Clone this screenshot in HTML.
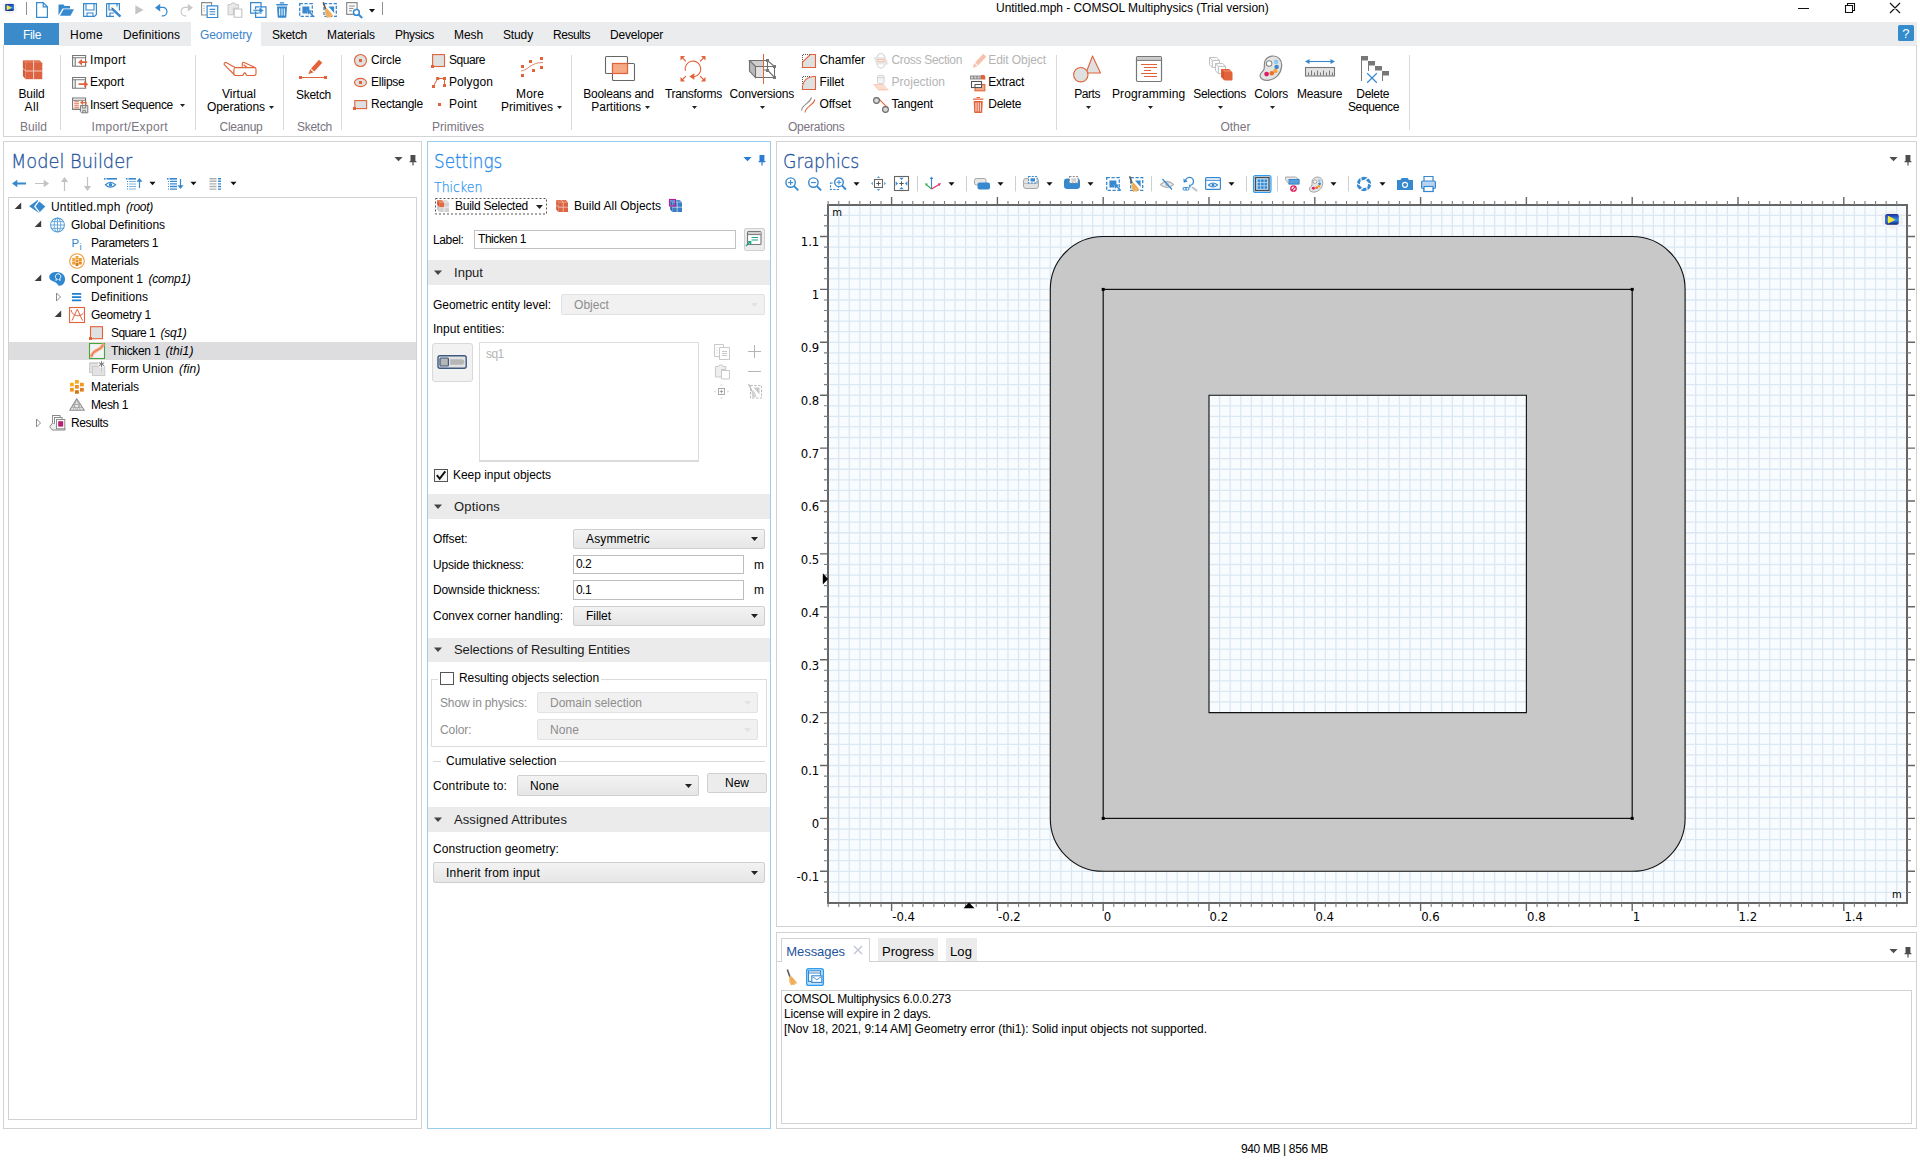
<!DOCTYPE html>
<html><head><meta charset="utf-8"><title>COMSOL Multiphysics</title>
<style>
html,body{margin:0;padding:0;}
body{width:1920px;height:1160px;position:relative;overflow:hidden;background:#fff;font-family:"Liberation Sans",sans-serif;font-size:12px;color:#000;}
.b{position:absolute;box-sizing:border-box;}
.t{position:absolute;white-space:pre;}
svg{overflow:visible;}
</style></head><body>
<span class="t" style="left:996.00px;top:0.00px;font-size:12px;line-height:17px;letter-spacing:-0.038px;">Untitled.mph - COMSOL Multiphysics (Trial version)</span>
<svg class="b" style="left:1795px;top:0px;" width="110" height="16" viewBox="0 0 110 16"><path d="M3 8.5h11 M50.5 5.5h7v7h-7z M52.5 5.5v-2h7v7h-2 M95 3l10 10 M105 3l-10 10" stroke="#111" stroke-width="1.1" fill="none"/></svg>
<svg class="b" style="left:0px;top:0px;" width="1" height="1" viewBox="0 0 1 1"><g transform="translate(5 4) scale(0.66)"><defs><linearGradient id="lgA" x1="0" y1="0" x2="0" y2="1"><stop offset="0" stop-color="#1b2f9a"/><stop offset=".55" stop-color="#2f8fe8"/><stop offset="1" stop-color="#10207a"/></linearGradient><linearGradient id="lgB" x1="0" y1="0" x2="1" y2="0"><stop offset="0" stop-color="#f8ee30"/><stop offset=".6" stop-color="#f0e040"/><stop offset="1" stop-color="#58b8e8"/></linearGradient></defs><path d="M-4.500 .5l12-4.500l9 5l1.500 8.500l-10 6l-10.500-4z" fill="#ededf0" opacity=".85"/><rect x="0" y="0" width="13.600" height="10.600" rx="2.200" fill="url(#lgA)"/><path d="M2.700 1.600l8.200 4l-8.200 3.900z" fill="url(#lgB)"/><rect x="0" y=".6" width="1.800" height="9.400" rx=".9" fill="#3a58c8" opacity=".8"/></g></svg>
<div class="b" style="left:26px;top:2px;width:1px;height:13px;background:#8f8f8f;"></div>
<svg class="b" style="left:36px;top:2px;" width="12" height="16" viewBox="0 0 12 16"><path d="M.6 .6h6.6l4.2 4.2v10.6h-10.8z M7.2 .6v4.2h4.2" fill="#fff" stroke="#3688cf" stroke-width="1.2"/></svg>
<svg class="b" style="left:58px;top:3px;" width="17" height="14" viewBox="0 0 17 14"><path d="M.5 12.5v-11h5l1.2 1.6h5.3v2.4h-7.5l-4 7z" fill="#3688cf"/><path d="M2 12.8l3.6-6.6h10.4l-3.6 6.6z" fill="#3688cf"/></svg>
<svg class="b" style="left:83px;top:3px;" width="14" height="14" viewBox="0 0 14 14"><path d="M.6 .6h12.8v10.8l-2 2h-10.8z" fill="none" stroke="#3688cf" stroke-width="1.2"/><path d="M3 .6v6.4h8v-6.4 M4 13.4v-3.4h6v3.4" fill="none" stroke="#3688cf" stroke-width="1.1"/></svg>
<svg class="b" style="left:106px;top:3px;" width="16" height="15" viewBox="0 0 16 15"><path d="M.6 .6h12.8v7 M8 13.4h-7.4v-12.8 M3 .6v6.4h5 M11 .6v3 M4 13.4v-3.4h4" fill="none" stroke="#3688cf" stroke-width="1.2"/><path d="M7.5 5.2l7.8 7.6l-1.7 1.8l-7.8-7.6z" fill="#3688cf"/><path d="M5.4 4.2l2.1 1l-1.7 1.8z" fill="#555"/></svg>
<svg class="b" style="left:135px;top:5px;" width="9" height="10" viewBox="0 0 9 10"><path d="M.3 .3l8.2 4.6l-8.2 4.6z" fill="#c4c4c4"/></svg>
<svg class="b" style="left:154px;top:3px;" width="16" height="14" viewBox="0 0 16 14"><path d="M1 4.8l5.2-4v2.9h3.3a5 5 0 0 1 0 9.8h-1.7v-1.3h1.5a3.6 3.6 0 0 0 0-7.1h-3.1v3.3z" fill="#3688cf"/></svg>
<svg class="b" style="left:178px;top:3px;" width="16" height="14" viewBox="0 0 16 14"><path d="M15 4.8l-5.2-4v2.9h-3.3a5 5 0 0 0 0 9.8h1.7v-1.3h-1.5a3.6 3.6 0 0 1 0-7.1h3.1v3.3z" fill="#c9c9c9"/></svg>
<svg class="b" style="left:201px;top:2px;" width="18" height="16" viewBox="0 0 18 16"><path d="M.6 .6h10v12.4h-10z" fill="#fff" stroke="#8c8c8c" stroke-width="1.1"/><path d="M2.6 4h1M2.6 6.4h1M2.6 8.8h1" stroke="#8c8c8c" stroke-width="1"/><path d="M6.1 3.9h10.6v11.6h-10.6z" fill="#fff" stroke="#3688cf" stroke-width="1.2"/><path d="M8.6 7.4h5.6M8.6 9.8h5.6M8.6 12.2h5.6" stroke="#3688cf" stroke-width="1.1"/></svg>
<svg class="b" style="left:227px;top:2px;" width="16" height="16" viewBox="0 0 16 16"><path d="M1 2.6h3l.8-1.6h3l.8 1.6h3v3.6h-5.2v6.6h-5.4z" fill="#e9e9e9" stroke="#c8c8c8" stroke-width="1"/><path d="M7.2 7h7.6v8.2h-7.6z" fill="#fff" stroke="#c2c2c2" stroke-width="1.1"/></svg>
<svg class="b" style="left:250px;top:2px;" width="17" height="16" viewBox="0 0 17 16"><path d="M.6 .6h10.4v10.6h-10.4z M5.6 4.8h10.4v10.6h-10.4z" fill="none" stroke="#3688cf" stroke-width="1.2"/><path d="M3 7.600h6.200v-2.700l4.600 3.500l-4.600 3.500v-2.700h-6.200z" fill="#3688cf" stroke="#fff" stroke-width=".5"/></svg>
<svg class="b" style="left:276px;top:2px;" width="12" height="16" viewBox="0 0 12 16"><path d="M.3 2h11.4v1.6h-11.4z M3.8 .2h4.4v1.4h-4.4z M1 4.6h10l-.7 10.4q0 .8-.9 .8h-6.8q-.9 0-.9-.8z" fill="#3688cf"/><path d="M3.7 6.4v7.2M6 6.4v7.2M8.3 6.4v7.2" stroke="#fff" stroke-width="1"/></svg>
<svg class="b" style="left:299px;top:3px;" width="16" height="15" viewBox="0 0 16 15"><rect x=".7" y=".7" width="12.6" height="12.6" fill="none" stroke="#3688cf" stroke-width="1.3" stroke-dasharray="3.2 1.6"/><path d="M3.4 3.4h7v4.2l-2.6-.6l.4 3.4h-4.8z" fill="#3688cf"/><path d="M8.4 7.2l6.8 6.8" stroke="#3688cf" stroke-width="1.4"/><path d="M8 6.8l5 .9l-4.1 4.1z" fill="#3688cf"/></svg>
<svg class="b" style="left:322px;top:2px;" width="16" height="16" viewBox="0 0 16 16"><rect x="2" y="1.7" width="12.3" height="12.6" fill="none" stroke="#3688cf" stroke-width="1.3" stroke-dasharray="3.2 1.6"/><path d="M6.5 4.4h5.6v6.500z" fill="#3688cf"/><path d="M1.2 0.2l2.600 7.200" stroke="#5a5a5a" stroke-width="1.600"/><path d="M2.9 7.5l2.200-.900q3.500 3.300 6.200 7.300l-2.400 .500l-.300 1.300l-2.200-.400l-1.500 .900q-2.200-4-2-8.700z" fill="#f3b565"/><path d="M4.4 8.8l2.300 5.500M5.2 8.2l3.400 4.600" stroke="#e09a40" stroke-width=".600" fill="none"/></svg>
<svg class="b" style="left:346px;top:2px;" width="18" height="17" viewBox="0 0 18 17"><path d="M.7 .7h10.4v11.6h-10.4z" fill="#fff" stroke="#8a8a8a" stroke-width="1.2"/><path d="M3 4h6M3 6.4h4.6M3 8.8h3" stroke="#8a8a8a" stroke-width="1"/><circle cx="10.4" cy="10.4" r="2.9" fill="#fff" stroke="#3688cf" stroke-width="1.5"/><path d="M12.6 12.6l3.6 3.4" stroke="#3688cf" stroke-width="2"/></svg>
<svg class="b" style="left:367.5px;top:7.75px;" width="8" height="5.5" viewBox="0 0 8 5.5"><path d="M1 1h6 l-3 3.5 z" fill="#111"/></svg>
<div class="b" style="left:382px;top:2px;width:1px;height:13px;background:#8f8f8f;"></div>
<div class="b" style="left:59px;top:22px;width:1858px;height:23.7px;background:#ebecee;"></div>
<div class="b" style="left:4px;top:23px;width:55px;height:21.5px;background:#3b8bca;"></div>
<div class="b" style="left:191px;top:22.3px;width:70px;height:24px;background:#fff;"></div>
<span class="t" style="left:23.00px;top:27.00px;font-size:12px;line-height:17px;letter-spacing:-0.334px;color:#fff;">File</span>
<span class="t" style="left:70.00px;top:27.00px;font-size:12px;line-height:17px;letter-spacing:0.247px;color:#000;">Home</span>
<span class="t" style="left:123.00px;top:27.00px;font-size:12px;line-height:17px;letter-spacing:0.088px;color:#000;">Definitions</span>
<span class="t" style="left:200.00px;top:27.00px;font-size:12px;line-height:17px;letter-spacing:-0.085px;color:#3b84cc;">Geometry</span>
<span class="t" style="left:272.00px;top:27.00px;font-size:12px;line-height:17px;letter-spacing:-0.281px;color:#000;">Sketch</span>
<span class="t" style="left:327.00px;top:27.00px;font-size:12px;line-height:17px;letter-spacing:-0.076px;color:#000;">Materials</span>
<span class="t" style="left:395.00px;top:27.00px;font-size:12px;line-height:17px;letter-spacing:-0.335px;color:#000;">Physics</span>
<span class="t" style="left:454.00px;top:27.00px;font-size:12px;line-height:17px;letter-spacing:-0.086px;color:#000;">Mesh</span>
<span class="t" style="left:503.00px;top:27.00px;font-size:12px;line-height:17px;letter-spacing:-0.137px;color:#000;">Study</span>
<span class="t" style="left:553.00px;top:27.00px;font-size:12px;line-height:17px;letter-spacing:-0.431px;color:#000;">Results</span>
<span class="t" style="left:610.00px;top:27.00px;font-size:12px;line-height:17px;letter-spacing:-0.189px;color:#000;">Developer</span>
<div class="b" style="left:1898px;top:25px;width:16px;height:15.7px;background:#348ccc;border-radius:1.5px;"></div>
<span class="t" style="left:1902.30px;top:25.00px;font-size:13px;line-height:18px;color:#fff;">?</span>
<div class="b" style="left:3px;top:45px;width:1914px;height:92px;border:1px solid #d4d4d4;border-top:none;"></div>
<div class="b" style="left:60px;top:55px;width:1px;height:75px;background:#dadada;"></div>
<div class="b" style="left:195px;top:55px;width:1px;height:75px;background:#dadada;"></div>
<div class="b" style="left:283px;top:55px;width:1px;height:75px;background:#dadada;"></div>
<div class="b" style="left:341px;top:55px;width:1px;height:75px;background:#dadada;"></div>
<div class="b" style="left:571px;top:55px;width:1px;height:75px;background:#dadada;"></div>
<div class="b" style="left:1056px;top:55px;width:1px;height:75px;background:#dadada;"></div>
<div class="b" style="left:1409px;top:55px;width:1px;height:75px;background:#dadada;"></div>
<span class="t" style="left:20.00px;top:118.50px;font-size:12px;line-height:17px;letter-spacing:0.063px;color:#7a7480;">Build</span>
<span class="t" style="left:91.50px;top:118.50px;font-size:12px;line-height:17px;letter-spacing:0.344px;color:#7a7480;">Import/Export</span>
<span class="t" style="left:219.50px;top:118.50px;font-size:12px;line-height:17px;letter-spacing:-0.243px;color:#7a7480;">Cleanup</span>
<span class="t" style="left:297.00px;top:118.50px;font-size:12px;line-height:17px;letter-spacing:-0.281px;color:#7a7480;">Sketch</span>
<span class="t" style="left:432.00px;top:118.50px;font-size:12px;line-height:17px;color:#7a7480;">Primitives</span>
<span class="t" style="left:788.00px;top:118.50px;font-size:12px;line-height:17px;letter-spacing:-0.210px;color:#7a7480;">Operations</span>
<span class="t" style="left:1220.50px;top:118.50px;font-size:12px;line-height:17px;letter-spacing:-0.022px;color:#7a7480;">Other</span>
<span class="t" style="left:18.50px;top:85.50px;font-size:12px;line-height:17px;letter-spacing:-0.137px;">Build</span>
<span class="t" style="left:24.50px;top:98.50px;font-size:12px;line-height:17px;letter-spacing:0.388px;">All</span>
<span class="t" style="left:222.00px;top:85.50px;font-size:12px;line-height:17px;letter-spacing:0.029px;">Virtual</span>
<span class="t" style="left:207.00px;top:98.50px;font-size:12px;line-height:17px;letter-spacing:-0.070px;">Operations</span>
<svg class="b" style="left:267.5px;top:105px;" width="7" height="5" viewBox="0 0 7 5"><path d="M1 1h5 l-2.5 3 z" fill="#222"/></svg>
<span class="t" style="left:296.00px;top:87.00px;font-size:12px;line-height:17px;letter-spacing:-0.281px;">Sketch</span>
<span class="t" style="left:516.00px;top:85.50px;font-size:12px;line-height:17px;letter-spacing:0.165px;">More</span>
<span class="t" style="left:501.00px;top:98.50px;font-size:12px;line-height:17px;">Primitives</span>
<svg class="b" style="left:556px;top:105px;" width="7" height="5" viewBox="0 0 7 5"><path d="M1 1h5 l-2.5 3 z" fill="#222"/></svg>
<span class="t" style="left:583.20px;top:85.50px;font-size:12px;line-height:17px;letter-spacing:-0.241px;">Booleans and</span>
<span class="t" style="left:591.30px;top:98.50px;font-size:12px;line-height:17px;letter-spacing:-0.032px;">Partitions</span>
<svg class="b" style="left:644px;top:105px;" width="7" height="5" viewBox="0 0 7 5"><path d="M1 1h5 l-2.5 3 z" fill="#222"/></svg>
<span class="t" style="left:664.90px;top:85.50px;font-size:12px;line-height:17px;letter-spacing:-0.313px;">Transforms</span>
<svg class="b" style="left:691px;top:105px;" width="7" height="5" viewBox="0 0 7 5"><path d="M1 1h5 l-2.5 3 z" fill="#222"/></svg>
<span class="t" style="left:729.50px;top:85.50px;font-size:12px;line-height:17px;letter-spacing:-0.200px;">Conversions</span>
<svg class="b" style="left:759px;top:105px;" width="7" height="5" viewBox="0 0 7 5"><path d="M1 1h5 l-2.5 3 z" fill="#222"/></svg>
<span class="t" style="left:1074.30px;top:85.50px;font-size:12px;line-height:17px;letter-spacing:-0.462px;">Parts</span>
<svg class="b" style="left:1085px;top:105px;" width="7" height="5" viewBox="0 0 7 5"><path d="M1 1h5 l-2.5 3 z" fill="#222"/></svg>
<span class="t" style="left:1112.00px;top:85.50px;font-size:12px;line-height:17px;letter-spacing:0.116px;">Programming</span>
<svg class="b" style="left:1147px;top:105px;" width="7" height="5" viewBox="0 0 7 5"><path d="M1 1h5 l-2.5 3 z" fill="#222"/></svg>
<span class="t" style="left:1193.20px;top:85.50px;font-size:12px;line-height:17px;letter-spacing:-0.257px;">Selections</span>
<svg class="b" style="left:1217px;top:105px;" width="7" height="5" viewBox="0 0 7 5"><path d="M1 1h5 l-2.5 3 z" fill="#222"/></svg>
<span class="t" style="left:1254.20px;top:85.50px;font-size:12px;line-height:17px;letter-spacing:-0.113px;">Colors</span>
<svg class="b" style="left:1269px;top:105px;" width="7" height="5" viewBox="0 0 7 5"><path d="M1 1h5 l-2.5 3 z" fill="#222"/></svg>
<span class="t" style="left:1297.00px;top:85.50px;font-size:12px;line-height:17px;letter-spacing:-0.198px;">Measure</span>
<span class="t" style="left:1356.30px;top:85.50px;font-size:12px;line-height:17px;letter-spacing:-0.331px;">Delete</span>
<span class="t" style="left:1348.00px;top:98.50px;font-size:12px;line-height:17px;letter-spacing:-0.381px;">Sequence</span>
<span class="t" style="left:90.00px;top:52.00px;font-size:12px;line-height:17px;letter-spacing:0.332px;">Import</span>
<span class="t" style="left:90.00px;top:74.00px;font-size:12px;line-height:17px;letter-spacing:-0.114px;">Export</span>
<span class="t" style="left:90.00px;top:96.50px;font-size:12px;line-height:17px;letter-spacing:-0.293px;">Insert Sequence</span>
<svg class="b" style="left:179px;top:103px;" width="7" height="5" viewBox="0 0 7 5"><path d="M1 1h5 l-2.5 3 z" fill="#222"/></svg>
<span class="t" style="left:371.00px;top:52.00px;font-size:12px;line-height:17px;letter-spacing:-0.112px;">Circle</span>
<span class="t" style="left:371.00px;top:74.00px;font-size:12px;line-height:17px;letter-spacing:-0.264px;">Ellipse</span>
<span class="t" style="left:371.00px;top:96.00px;font-size:12px;line-height:17px;letter-spacing:-0.226px;">Rectangle</span>
<span class="t" style="left:449.00px;top:52.00px;font-size:12px;line-height:17px;letter-spacing:-0.450px;">Square</span>
<span class="t" style="left:449.00px;top:74.00px;font-size:12px;line-height:17px;letter-spacing:0.090px;">Polygon</span>
<span class="t" style="left:449.00px;top:96.00px;font-size:12px;line-height:17px;letter-spacing:0.130px;">Point</span>
<span class="t" style="left:819.50px;top:52.00px;font-size:12px;line-height:17px;letter-spacing:-0.074px;">Chamfer</span>
<span class="t" style="left:819.50px;top:74.00px;font-size:12px;line-height:17px;letter-spacing:-0.139px;">Fillet</span>
<span class="t" style="left:819.50px;top:96.00px;font-size:12px;line-height:17px;letter-spacing:-0.049px;">Offset</span>
<span class="t" style="left:891.50px;top:52.00px;font-size:12px;line-height:17px;letter-spacing:-0.323px;color:#b4b4b4;">Cross Section</span>
<span class="t" style="left:891.50px;top:74.00px;font-size:12px;line-height:17px;letter-spacing:0.014px;color:#b4b4b4;">Projection</span>
<span class="t" style="left:891.50px;top:96.00px;font-size:12px;line-height:17px;letter-spacing:-0.172px;">Tangent</span>
<span class="t" style="left:988.30px;top:52.00px;font-size:12px;line-height:17px;letter-spacing:-0.090px;color:#b4b4b4;">Edit Object</span>
<span class="t" style="left:988.30px;top:74.00px;font-size:12px;line-height:17px;letter-spacing:-0.235px;">Extract</span>
<span class="t" style="left:988.30px;top:96.00px;font-size:12px;line-height:17px;letter-spacing:-0.331px;">Delete</span>
<svg class="b" style="left:0px;top:0px;" width="1920" height="140" viewBox="0 0 1920 140"><path d="M25.5 63h16.8v16.2h-16.8z" fill="#dc6443"/><path d="M25.5 63l-2.6-2.8h16.6l2.8 2.8z" fill="#e27553"/><path d="M25.5 63l-2.6-2.8v15.8l2.6 3.2z" fill="#d25a3a"/><path d="M33.6 60.4v2.6v16.2 M25.5 71h16.8 M22.9 68.2l2.6 2.8" stroke="#f6d5c8" stroke-width=".9" fill="none"/><path d="M72.6 55.5 h13 v10.8 h-13z M72.6 57.7 h13 M75.2 57.7 v8.6" fill="none" stroke="#777" stroke-width="1.1"/><path d="M78 62.2 l4-3.2v2.3h5.2v1.8h-5.2v2.3z" fill="#e2623a"/><path d="M72.6 77.5 h13 v10.8 h-13z M72.6 79.7 h13 M75.2 79.7 v8.6" fill="none" stroke="#777" stroke-width="1.1"/><path d="M88.2 84.2 l-4-3.2v2.3h-5.6v1.8h5.6v2.3z" fill="#e2623a"/><path d="M72.6 98h13v11.4h-13z M72.6 100.2h13" fill="#fff" stroke="#777" stroke-width="1.1"/><path d="M74.3 101.8h4.6M74.3 103.8h4.6M74.3 105.8h4.6M74.3 107.8h4.6" stroke="#e2623a" stroke-width="1"/><path d="M80 102.6l3-2.4v1.7h3.6v2.6h-1.3v-1.2h-2.3v1.7z" fill="#e2623a"/><path d="M80.4 105.4h7.4v7.4h-6.2l-1.2-1.2z" fill="#e4e4e4" stroke="#777" stroke-width="1"/><path d="M82.3 105.6v2.4h3.4v-2.4 M82.8 112.6v-2.2h2.6v2.2" fill="none" stroke="#777" stroke-width=".9"/><path d="M235.2 67.6h19.2q1.6 0 1.6 1.6v4.6q0 1.7-1.7 1.7h-7.6l-1.6-2.6h-.8l-1.6 2.6h-7.6l-10.6-10.6q-1-1.2.4-2.2q.9-.6 2 .2z M235.2 67.6q-1.3 .9-1.300 2.4v5 M242.300 66.8v-3.200q.1-1.800 1.900-1.100l10.800 5.100 M243.600 64.700l3.200 2.600" fill="none" stroke="#e2623a" stroke-width="1.15" stroke-linejoin="round"/><path d="M311 68.500l8-8.800l3.300 3l-8 8.800z" fill="#e2623a"/><path d="M310.300 69.300l3.300 3l-5.300 2z" fill="#e2623a"/><path d="M311.100 70.100l1.600 1.500" stroke="#f8c9b8" stroke-width="1"/><path d="M299.500 77.500h27" stroke="#e2623a" stroke-width="1"/><rect x="299" y="76" width="3" height="3" fill="#e2623a"/><rect x="324" y="76" width="3" height="3" fill="#e2623a"/><circle cx="360.500" cy="60.500" r="6" fill="#dfe1e1" stroke="#e2623a" stroke-width="1.1"/><rect x="359" y="59" width="3" height="3" fill="#e2623a"/><ellipse cx="360.500" cy="82.500" rx="6" ry="4.100" fill="#dfe1e1" stroke="#e2623a" stroke-width="1.1"/><rect x="359" y="81" width="3" height="3" fill="#e2623a"/><rect x="354.800" y="100.600" width="11.800" height="8" fill="#dfe1e1" stroke="#e2623a" stroke-width="1.1"/><rect x="353" y="107" width="3" height="3" fill="#e2623a"/><rect x="432.600" y="54.600" width="11.900" height="11.900" fill="#dfe1e1" stroke="#e2623a" stroke-width="1.1"/><rect x="431" y="65" width="3" height="3" fill="#e2623a"/><path d="M433.500 86l4.200-7.500h6.800v7" fill="none" stroke="#e2623a" stroke-width="1"/><rect x="432" y="85" width="3" height="3" fill="#e2623a"/><rect x="436.2" y="77" width="3" height="3" fill="#e2623a"/><rect x="443" y="77" width="3" height="3" fill="#e2623a"/><rect x="443" y="84" width="3" height="3" fill="#e2623a"/><rect x="438" y="103" width="3" height="3" fill="#e2623a"/><rect x="540" y="57" width="3" height="3" fill="#e2623a"/><rect x="529" y="60" width="3" height="3" fill="#e2623a"/><rect x="521" y="65" width="3" height="3" fill="#e2623a"/><rect x="540" y="66" width="3" height="3" fill="#e2623a"/><rect x="532" y="69" width="3" height="3" fill="#e2623a"/><rect x="521" y="74" width="3" height="3" fill="#e2623a"/><path d="M521 71c8-1 9-8.500 22-8.500" fill="none" stroke="#e8876a" stroke-width="1"/><rect x="605.500" y="56.500" width="22" height="17" rx="1" fill="none" stroke="#666" stroke-width="1.1"/><rect x="612.500" y="63.500" width="22" height="17" rx="1" fill="none" stroke="#666" stroke-width="1.1"/><rect x="612.500" y="63.500" width="15" height="10" fill="#f4a987" stroke="#e2623a" stroke-width="1.2"/><path d="M685.400 70.800a7.800 7.800 0 1 1 8.600 5.900" fill="none" stroke="#e2623a" stroke-width="1.1"/><path d="M689.300 76.500l5-3.200v6.400z" fill="#e2623a"/><path d="M680.5 56l4.6 0l-4.6 4.6z" fill="#e2623a"/><path d="M681.5 57l4.4 4.4" stroke="#e2623a" stroke-width="1.2"/><path d="M705.5 56l-4.6 0l4.6 4.6z" fill="#e2623a"/><path d="M704.5 57l-4.4 4.4" stroke="#e2623a" stroke-width="1.2"/><path d="M680.5 81.5l4.6 0l-4.6 -4.6z" fill="#e2623a"/><path d="M681.5 80.5l4.4 -4.4" stroke="#e2623a" stroke-width="1.2"/><path d="M705.5 81.5l-4.6 0l4.6 -4.6z" fill="#e2623a"/><path d="M704.5 80.5l-4.4 -4.4" stroke="#e2623a" stroke-width="1.2"/><path d="M749.500 60.500h14v6h-8z" fill="#cfcfcf"/><path d="M749.500 60.500l6 6v11l-6-6.500z" fill="#b9b9b9"/><path d="M755.500 66.500h8v11h-8z" fill="#e2e2e2"/><path d="M749.500 60.500h18l7 6h-19z M749.500 60.500v10.500l6 6.500v-11 M755.500 77.500h19v-11 M767.500 60.500v9.500l7 7.500 M763.500 70h4" fill="none" stroke="#6f6f6f" stroke-width="1.1"/><rect x="766" y="59" width="3" height="3" fill="#777"/><rect x="773" y="65" width="3" height="3" fill="#777"/><rect x="766" y="69" width="3" height="3" fill="#777"/><rect x="773" y="76" width="3" height="3" fill="#777"/><path d="M763.500 54v30" stroke="#e2623a" stroke-width="1"/><path d="M802.500 62v-7.500h8" fill="none" stroke="#555" stroke-width="1" stroke-dasharray="1 1"/><path d="M802.500 62.200l7.800-7.700h5.200v13h-13z" fill="#dfe1e1" stroke="#e2623a" stroke-width="1.1"/><path d="M802.500 84v-7.500h8" fill="none" stroke="#555" stroke-width="1" stroke-dasharray="1 1"/><path d="M802.500 86.500q1-8.800 10.400-10h2.600v13h-13z" fill="#dfe1e1" stroke="#e2623a" stroke-width="1.1"/><path d="M801.500 110.500c1-7 8-6 10-13" fill="none" stroke="#888" stroke-width="1.1"/><path d="M805 112.500c1-7 8-6 10-13" fill="none" stroke="#e2623a" stroke-width="1.1"/><ellipse cx="881" cy="60.800" rx="4.600" ry="7.300" fill="none" stroke="#d6d6d6" stroke-width="1.1"/><path d="M873.500 57h12l3.300 7.500h-12z" fill="#e4e4e4" opacity=".9"/><rect x="877.300" y="59" width="7.400" height="3" fill="#f7c3ae"/><path d="M878.300 60.500h5.400" stroke="#fff" stroke-width=".8"/><path d="M877.500 76.500v6a3.300 1.300 0 0 0 6.600 0v-6a3.300 1.300 0 0 0-6.600 0a3.300 1.300 0 0 0 6.600 0" fill="#f4f4f4" stroke="#d2d2d2" stroke-width="1"/><path d="M873 84h10.500l5.500 6.500h-10.500z" fill="#f9cdbb"/><path d="M876 86h9M878 88h9" stroke="#fff" stroke-width=".7"/><path d="M878.300 98.300l8.700 8.900" stroke="#e2623a" stroke-width="1.100"/><circle cx="876.500" cy="100.500" r="2.900" fill="#d9d9d9" stroke="#666" stroke-width="1.100"/><circle cx="885.500" cy="109.500" r="2.900" fill="#d9d9d9" stroke="#666" stroke-width="1.100"/><path d="M975 62.500l8.300-8.700l3 2.900l-8.300 8.700z" fill="#f7c2ad"/><path d="M974.300 63.300l3 2.900l-4.800 1.800z" fill="#f7c2ad"/><rect x="970" y="75.500" width="10.800" height="4" fill="#8c8c8c"/><path d="M971 76.500h2v2h-2zM974.300 76.500h2v2h-2zM977.600 76.500h2v2h-2z" fill="#cfcfcf"/><path d="M981 75h3l1.300 1.300v3.200h-4.300z" fill="#e2623a"/><rect x="975" y="84.500" width="9.800" height="6.300" fill="#f4a987" stroke="#e2623a" stroke-width="1.100"/><rect x="971.500" y="81.500" width="10" height="6" fill="#fff" stroke="#555" stroke-width="1.100"/><rect x="975" y="84.500" width="6.500" height="3" fill="#fff" stroke="#555" stroke-width="1"/><path d="M973 98.500h10.400v1.300h-10.400z M976.500 97h3.400v1h-3.400z M973.700 101h9l-.5 11.300q0 .7-.8 .7h-6.400q-.8 0-.8-.7z" fill="#e2623a"/><path d="M976 102.500v9M978.200 102.500v9M980.400 102.500v9" stroke="#fff" stroke-width=".9"/><path d="M1092.500 56l-6.500 17h14.500z" fill="#dfe1e1" stroke="#e2623a" stroke-width="1.100" stroke-linejoin="round"/><circle cx="1080.800" cy="74.700" r="7.200" fill="#dfe1e1" stroke="#e2623a" stroke-width="1.100"/><rect x="1136.500" y="56.500" width="25" height="25" rx="1.200" fill="#fff" stroke="#777" stroke-width="1.200"/><rect x="1137" y="57" width="24" height="3.200" fill="#cdcdcd"/><path d="M1136.500 60.400h25" stroke="#777" stroke-width="1"/><path d="M1141 64.500h16M1144 67.500h13M1144 70.500h7M1141 73.500h16M1144 76.500h13" stroke="#e2623a" stroke-width="1"/><path d="M1212.3 60.3h7.2v7.2h-7.2z" fill="#fff" stroke="#c2c2c2" stroke-width="1"/><path d="M1212.3 60.3l-2.8 -2.8h7.2l2.8 2.8z" fill="#fff" stroke="#c2c2c2" stroke-width="1"/><path d="M1212.3 60.3l-2.8 -2.8v7.2l2.8 2.8z" fill="#fff" stroke="#c2c2c2" stroke-width="1"/><path d="M1218.3 66.3h7.2v7.2h-7.2z" fill="#fff" stroke="#c2c2c2" stroke-width="1"/><path d="M1218.3 66.3l-2.8 -2.8h7.2l2.8 2.8z" fill="#fff" stroke="#c2c2c2" stroke-width="1"/><path d="M1218.3 66.3l-2.8 -2.8v7.2l2.8 2.8z" fill="#fff" stroke="#c2c2c2" stroke-width="1"/><path d="M1224.44 72.44h7.56v7.56h-7.56z" fill="#e2623a" stroke="#e2623a" stroke-width="1"/><path d="M1224.44 72.44l-2.94 -2.94h7.56l2.94 2.94z" fill="#ea7c58" stroke="#e2623a" stroke-width="1"/><path d="M1224.44 72.44l-2.94 -2.94v7.56l2.94 2.94z" fill="#d2552f" stroke="#e2623a" stroke-width="1"/><g transform="translate(1259.8 55.3) scale(1)"><path d="M12 .8c6.500-.8 10.500 4 9.800 10.500c-.7 7-6 13-13.500 13.700c-4.500 .4-8.300-1.700-8-5c.3-3 3.300-3.500 4-6.500c.8-3.300-.5-5.500 1.200-8.500c1.300-2.300 3.700-3.800 6.500-4.200z" fill="#e4e4e4" stroke="#888" stroke-width="1.200"/><circle cx="9.300" cy="8.200" r="2.800" fill="#fff" stroke="#888" stroke-width="1.100"/><circle cx="16.300" cy="6.600" r="2.300" fill="#8ecbf2"/><circle cx="16.800" cy="11.600" r="2.200" fill="#3a86cc"/><circle cx="15.600" cy="15.700" r="2.200" fill="#f6a53d"/><circle cx="12" cy="18" r="2.200" fill="#ee6c30"/><circle cx="6.800" cy="18.800" r="2.400" fill="#dc1e64"/></g><path d="M1308 61.500h24" stroke="#3688cf" stroke-width="1.100"/><path d="M1305 61.500l4.500-2.600v5.200z M1335 61.500l-4.500-2.600v5.200z" fill="#3688cf"/><rect x="1305.500" y="67.500" width="29" height="8.500" fill="#e2e2e2" stroke="#777" stroke-width="1.100"/><path d="M1308.500 75.500v-3M1311.500 75.500v-5M1314.500 75.500v-3M1317.500 75.500v-5M1320.500 75.500v-3M1323.500 75.500v-5M1326.500 75.500v-3M1329.500 75.500v-5M1332.500 75.500v-3" stroke="#777" stroke-width="1"/><path d="M1361 56h7v4.500h-7zM1368 61h7v4.500h-7zM1375 66h7v4.500h-7zM1382 71h7v4.500h-7z" fill="#777"/><path d="M1361.500 56v25M1368.500 61v10M1382.500 71v10" stroke="#777" stroke-width="1"/><path d="M1367.200 73.300l9.600 9.400M1376.800 73.300l-9.600 9.400" stroke="#3688cf" stroke-width="1.200"/></svg>
<div class="b" style="left:3px;top:141px;width:419px;height:988px;border:1px solid #d2d2d2;"></div>
<div class="b" style="left:8px;top:197px;width:409px;height:923px;border:1px solid #d2d2d2;"></div>
<span class="t" style="left:11.00px;top:148.00px;font-size:19.8px;line-height:28px;transform:scaleX(0.8990);transform-origin:0 0;color:#24539b;font-family:'DejaVu Sans',sans-serif;font-weight:200;-webkit-text-stroke:0.3px #24539b;">Model Builder</span>
<svg class="b" style="left:394px;top:154px;" width="12" height="12" viewBox="0 0 12 12"><path d="M.4 3h8.200l-4.100 4.200z" fill="#4d4d4f"/></svg>
<svg class="b" style="left:409px;top:154px;" width="10" height="14" viewBox="0 0 10 14"><path d="M1.500 1h4.900v6h.9l.2 1.200h-2.900v3l-.6 .6l-.6-.6v-3h-2.900l.2-1.200h.8z" fill="#4d4d4f"/></svg>
<div class="b" style="left:9px;top:342px;width:407px;height:18px;background:#dddde0;"></div>
<svg class="b" style="left:0px;top:0px;" width="430" height="440" viewBox="0 0 430 440"><path d="M12 183.5l5.300-3.800v2.900h8.700v1.800h-8.700v2.900z" fill="#3688cf"/><path d="M49 183.5l-5.300-3.800v3.200h-8.700v1.200h8.700v3.200z" fill="#c2c2c2"/><path d="M64.500 177l-3.600 5h3v9h1.200v-9h3z" fill="#c2c2c2"/><path d="M87.500 191l-3.600-5h3v-9h1.200v9h3z" fill="#c2c2c2"/><rect x="104" y="178" width="1.600" height="1.600" fill="#3688cf"/><rect x="106.500" y="178" width="10.500" height="1.600" fill="#3688cf"/><path d="M105.500 184.800q5-4.800 10 0q-5 4.800-10 0z" fill="#fff" stroke="#3688cf" stroke-width="1.200"/><circle cx="110.500" cy="184.800" r="1.700" fill="#3688cf"/><rect x="126" y="178" width="1.500" height="1.600" fill="#3688cf"/><rect x="128.500" y="178" width="7.500" height="1.600" fill="#3688cf"/><path d="M127 181.500h1M127 184h1M127 186.500h1M127 189h1" stroke="#3688cf" stroke-width="1"/><path d="M129 181.500h7M129 184h7M129 186.500h7M129 189h7" stroke="#7fb5e3" stroke-width="1"/><path d="M139.500 178l-3 3.800h2.400v6.200h1.200v-6.200h2.400z" fill="#3688cf"/><path d="M149.5 181.75h6l-3 3.5z" fill="#111"/><rect x="167" y="178" width="1.500" height="1.600" fill="#3688cf"/><rect x="169.500" y="178" width="7.500" height="1.600" fill="#3688cf"/><path d="M168 181.500h1M168 184h1M168 186.500h1M168 189h1" stroke="#3688cf" stroke-width="1"/><path d="M170 181.300h7M170 183.900h7M170 186.500h7M170 189.100h7" stroke="#3688cf" stroke-width="1.300"/><path d="M180.500 189l-3-3.800h2.400v-6.200h1.200v6.200h2.400z" fill="#3688cf"/><path d="M190.5 181.75h6l-3 3.5z" fill="#111"/><path d="M209.500 178.800h7M209.500 181.300h7M209.500 183.900h7M209.500 186.500h7M209.500 189.100h7" stroke="#b0b0b0" stroke-width="1.400"/><path d="M218 178.800h3M218 181.300h3M218 183.900h3M218 186.500h3M218 189.100h3" stroke="#3688cf" stroke-width="1.400"/><path d="M230.5 181.75h6l-3 3.5z" fill="#111"/><path d="M29.200 206.300l8.400-6.300l7.700 6.500l-6.400 6.400z" fill="#3688cf"/><path d="M39.300 200.300l-4.500 6.100l4.700 6.300" fill="none" stroke="#fff" stroke-width="1.300"/><circle cx="57.5" cy="225" r="6.900" fill="#fff" stroke="#5a9fd8" stroke-width="1.100"/><ellipse cx="57.5" cy="225" rx="3.300" ry="6.900" fill="none" stroke="#5a9fd8" stroke-width=".9"/><path d="M57.5 218.1v13.800M50.6 225h13.800M51.5 221.7h12M51.5 228.3h12" stroke="#5a9fd8" stroke-width=".9" fill="none"/><circle cx="77" cy="261" r="7.300" fill="#fff" stroke="#ee9a3a" stroke-width="1.100"/><rect x="75.5" y="256" width="3" height="3" fill="#f3a638"/><rect x="72.2" y="258" width="3" height="3" fill="#f3a638"/><rect x="78.8" y="258" width="3" height="3" fill="#ee9a30"/><rect x="75.5" y="259.5" width="3" height="3" fill="#ee9030"/><rect x="72.2" y="261.5" width="3" height="3" fill="#ee9a30"/><rect x="78.8" y="261.5" width="3" height="3" fill="#e88a28"/><rect x="75.5" y="263" width="3" height="3" fill="#d87a1c"/><path d="M49.300 276.500c.500-3.500 5-4.800 9-4.300c4.500 .600 7 3.500 6.700 7.500c-.200 3-2.500 6-5.300 6c-2 0-2.200-2.400-4-3.300c-2.500-1.200-6.800-1.900-6.400-5.900z" fill="#3087d0"/><path d="M55.300 280h1.800v-.800c-1.200-.600-1.700-1.500-1.700-2.600c0-1.700 1.200-2.800 2.700-2.800c1.500 0 2.700 1.100 2.700 2.800c0 1.100-.500 2-1.700 2.600v.800h1.800" fill="none" stroke="#fff" stroke-width="1"/><path d="M72 293.800h9.200M72 297.100h9.200M72 300.400h9.200" stroke="#1f80d2" stroke-width="1.700"/><rect x="69.500" y="307.500" width="15" height="15" fill="#fff" stroke="#e2623a" stroke-width="1.100"/><path d="M72 320.500l5.300-11.300l5.200 11.300M71 310c1.500 6.500 9 7.500 12.500 3" fill="none" stroke="#e2623a" stroke-width="1"/><rect x="90.500" y="326.700" width="12" height="12" fill="#dfe1e1" stroke="#e2623a" stroke-width="1.100"/><rect x="89" y="337" width="3" height="3" fill="#e2623a"/><rect x="89.500" y="343.500" width="15" height="15" fill="#f3f3f3" stroke="#46a53a" stroke-width="1.100"/><path d="M91.500 356c3-8 8-4 11.500-11" fill="none" stroke="#f4a987" stroke-width="3.400" stroke-linecap="round"/><path d="M91.500 356c3-8 8-4 11.500-11" fill="none" stroke="#e4683f" stroke-width="1"/><rect x="89.500" y="363" width="12" height="9.500" fill="#e2e2e2" stroke="#cbcbcb" stroke-width="1"/><rect x="92.500" y="366.500" width="12.300" height="9" fill="#e2e2e2" stroke="#cbcbcb" stroke-width="1"/><path d="M89.500 363h12v9.500" fill="none" stroke="#cbcbcb"/><circle cx="101.600" cy="364.200" r="3.400" fill="#fff"/><path d="M101.600 361.200v6M99 362.700l5.200 3M99 365.700l5.200-3" stroke="#777" stroke-width="1"/><rect x="75" y="380" width="3.800" height="3.600" fill="#f6a81e"/><rect x="70" y="382.8" width="3.800" height="3.600" fill="#f9ac1c"/><rect x="80" y="382.8" width="3.800" height="3.600" fill="#f3951f"/><rect x="75" y="385" width="3.800" height="3.600" fill="#f08d22"/><rect x="70" y="388" width="3.800" height="3.600" fill="#f3951f"/><rect x="80" y="388" width="3.800" height="3.600" fill="#e27d1c"/><rect x="75" y="390.2" width="3.800" height="3.600" fill="#d87512"/><path d="M76.700 398.800l-7 11.400h14.600z" fill="#e9e9e9" stroke="#8e8e8e" stroke-width="1.100" stroke-linejoin="round"/><path d="M73.200 404.500h7M71.400 407.400h10.600M76.700 398.800l-3.500 11.400M76.700 398.800l3.600 11.400M73.200 404.500l3.600 5.700M80.200 404.500l-3.400 5.700" stroke="#9a9a9a" stroke-width=".7" fill="none"/><rect x="52.500" y="415.500" width="7.500" height="8" fill="#fff" stroke="#8a8a8a" stroke-width="1"/><rect x="54.500" y="417.500" width="7.500" height="8" fill="#fff" stroke="#8a8a8a" stroke-width="1"/><path d="M52.500 423l-2.800 3.800l2.600 3.200h12.700v-1.500" fill="#eee" stroke="#8a8a8a" stroke-width="1"/><rect x="56.500" y="419.500" width="8.300" height="9.300" fill="#fff" stroke="#8a8a8a" stroke-width="1"/><rect x="58.200" y="421.200" width="5" height="5.400" fill="#b81f70"/></svg>
<span class="t" style="left:71.50px;top:235.00px;font-size:11.5px;line-height:16px;color:#3688cf;">P</span>
<span class="t" style="left:79.50px;top:239.50px;font-size:9.5px;line-height:13px;color:#3688cf;">i</span>
<span class="t" style="left:51.00px;top:199.00px;font-size:12px;line-height:17px;letter-spacing:0.178px;">Untitled.mph</span>
<span class="t" style="left:126.00px;top:199.00px;font-size:12px;line-height:17px;letter-spacing:-0.279px;font-style:italic;">(root)</span>
<svg class="b" style="left:14px;top:202px;" width="8" height="8" viewBox="0 0 8 8"><path d="M7.200 .600v6.400h-6.500z" fill="#3c3c3c"/></svg>
<span class="t" style="left:71.00px;top:217.00px;font-size:12px;line-height:17px;">Global Definitions</span>
<svg class="b" style="left:34px;top:220px;" width="8" height="8" viewBox="0 0 8 8"><path d="M7.200 .600v6.400h-6.500z" fill="#3c3c3c"/></svg>
<span class="t" style="left:91.00px;top:235.00px;font-size:12px;line-height:17px;letter-spacing:-0.419px;">Parameters 1</span>
<span class="t" style="left:91.00px;top:253.00px;font-size:12px;line-height:17px;letter-spacing:-0.076px;">Materials</span>
<span class="t" style="left:71.00px;top:271.00px;font-size:12px;line-height:17px;">Component 1</span>
<span class="t" style="left:148.50px;top:271.00px;font-size:12px;line-height:17px;letter-spacing:-0.287px;font-style:italic;">(comp1)</span>
<svg class="b" style="left:34px;top:274px;" width="8" height="8" viewBox="0 0 8 8"><path d="M7.200 .600v6.400h-6.500z" fill="#3c3c3c"/></svg>
<span class="t" style="left:91.00px;top:289.00px;font-size:12px;line-height:17px;letter-spacing:0.088px;">Definitions</span>
<svg class="b" style="left:55px;top:292px;" width="7" height="10" viewBox="0 0 7 10"><path d="M1.5 1l4 4l-4 4z" fill="#fff" stroke="#8a8a8a" stroke-width="1"/></svg>
<span class="t" style="left:91.00px;top:307.00px;font-size:12px;line-height:17px;letter-spacing:-0.269px;">Geometry 1</span>
<svg class="b" style="left:54px;top:310px;" width="8" height="8" viewBox="0 0 8 8"><path d="M7.200 .600v6.400h-6.500z" fill="#3c3c3c"/></svg>
<span class="t" style="left:111.00px;top:325.00px;font-size:12px;line-height:17px;letter-spacing:-0.588px;">Square 1</span>
<span class="t" style="left:160.50px;top:325.00px;font-size:12px;line-height:17px;letter-spacing:-0.268px;font-style:italic;">(sq1)</span>
<span class="t" style="left:111.00px;top:343.00px;font-size:12px;line-height:17px;letter-spacing:-0.336px;">Thicken 1</span>
<span class="t" style="left:165.50px;top:343.00px;font-size:12px;line-height:17px;letter-spacing:0.110px;font-style:italic;">(thi1)</span>
<span class="t" style="left:111.00px;top:361.00px;font-size:12px;line-height:17px;letter-spacing:-0.019px;">Form Union</span>
<span class="t" style="left:179.00px;top:361.00px;font-size:12px;line-height:17px;letter-spacing:0.167px;font-style:italic;">(fin)</span>
<span class="t" style="left:91.00px;top:379.00px;font-size:12px;line-height:17px;letter-spacing:-0.076px;">Materials</span>
<span class="t" style="left:91.00px;top:397.00px;font-size:12px;line-height:17px;letter-spacing:-0.392px;">Mesh 1</span>
<span class="t" style="left:71.00px;top:415.00px;font-size:12px;line-height:17px;letter-spacing:-0.431px;">Results</span>
<svg class="b" style="left:35px;top:418px;" width="7" height="10" viewBox="0 0 7 10"><path d="M1.5 1l4 4l-4 4z" fill="#fff" stroke="#8a8a8a" stroke-width="1"/></svg>
<div class="b" style="left:427px;top:141px;width:344px;height:988px;border:1px solid #9ccdee;"></div>
<span class="t" style="left:434.20px;top:148.00px;font-size:19.9px;line-height:28px;transform:scaleX(0.8452);transform-origin:0 0;color:#1e88ee;font-family:'DejaVu Sans',sans-serif;font-weight:200;-webkit-text-stroke:0.3px #1e88ee;">Settings</span>
<svg class="b" style="left:743px;top:154px;" width="12" height="12" viewBox="0 0 12 12"><path d="M.4 3h8.200l-4.100 4.200z" fill="#2b7cd3"/></svg>
<svg class="b" style="left:758px;top:154px;" width="10" height="14" viewBox="0 0 10 14"><path d="M1.500 1h4.900v6h.9l.2 1.200h-2.900v3l-.6 .6l-.6-.6v-3h-2.900l.2-1.200h.8z" fill="#2b7cd3"/></svg>
<span class="t" style="left:434.00px;top:177.00px;font-size:14.3px;line-height:20px;transform:scaleX(0.8775);transform-origin:0 0;color:#2b93f2;font-family:'DejaVu Sans',sans-serif;font-weight:200;-webkit-text-stroke:0.25px #2b93f2;">Thicken</span>
<svg class="b" style="left:434px;top:197px;" width="114" height="18" viewBox="0 0 114 18"><rect x="1.5" y="1.5" width="111" height="15.5" fill="none" stroke="#555" stroke-width="1" stroke-dasharray="2 2"/></svg>
<span class="t" style="left:455.00px;top:198.00px;font-size:12px;line-height:17px;letter-spacing:-0.266px;">Build Selected</span>
<svg class="b" style="left:535px;top:203.5px;" width="9" height="6" viewBox="0 0 9 6"><path d="M1 1h7 l-3.5 4 z" fill="#222"/></svg>
<span class="t" style="left:574.00px;top:198.00px;font-size:12px;line-height:17px;letter-spacing:0.017px;">Build All Objects</span>
<span class="t" style="left:433.00px;top:231.50px;font-size:12px;line-height:17px;letter-spacing:-0.366px;">Label:</span>
<div class="b" style="left:474px;top:230px;width:262px;height:19px;background:#fff;border:1px solid #c2c2c2;"></div>
<span class="t" style="left:478.00px;top:231.00px;font-size:12px;line-height:17px;letter-spacing:-0.447px;">Thicken 1</span>
<div class="b" style="left:744px;top:228px;width:21px;height:22.5px;background:#ececec;border:1px solid #d0d0d0;border-radius:2px;"></div>
<div class="b" style="left:428px;top:260px;width:342px;height:24.5px;background:#ebebeb;"></div>
<svg class="b" style="left:433px;top:269px;" width="10" height="8" viewBox="0 0 10 8"><path d="M1 1.5h8l-4 4.5z" fill="#444"/></svg>
<span class="t" style="left:454.00px;top:264.00px;font-size:13px;line-height:18px;letter-spacing:0.017px;color:#1a1a1a;">Input</span>
<span class="t" style="left:433.00px;top:297.00px;font-size:12px;line-height:17px;letter-spacing:-0.031px;">Geometric entity level:</span>
<div class="b" style="left:561px;top:294px;width:204px;height:21px;background:#f1f1f1;border:1px solid #e2e2e2;border-radius:2px;"></div>
<span class="t" style="left:574.00px;top:297.00px;font-size:12px;line-height:17px;letter-spacing:0.053px;color:#8d8d8d;">Object</span>
<svg class="b" style="left:749.5px;top:302px;" width="9" height="6" viewBox="0 0 9 6"><path d="M1 1h7 l-3.5 4 z" fill="#e2e2e2"/></svg>
<span class="t" style="left:433.00px;top:321.00px;font-size:12px;line-height:17px;letter-spacing:0.008px;">Input entities:</span>
<div class="b" style="left:432px;top:342.5px;width:40.5px;height:39.5px;background:#f2f2f2;border:1px solid #d9d9d9;border-radius:3px;"></div>
<div class="b" style="left:479px;top:342px;width:220px;height:119.5px;background:#fff;border:1px solid #dcdcdc;border-bottom:2px solid #dadada;"></div>
<span class="t" style="left:486.00px;top:346.00px;font-size:12px;line-height:17px;letter-spacing:-0.600px;color:#b5b5b5;">sq1</span>
<div class="b" style="left:434px;top:469px;width:14px;height:13px;background:#f6f6f6;border:1px solid #555;"></div>
<svg class="b" style="left:434px;top:469px;" width="14" height="13" viewBox="0 0 14 13"><path d="M2.800 6.200l2.900 3.500L11.300 2.400" stroke="#111" stroke-width="1.900" fill="none"/></svg>
<span class="t" style="left:453.00px;top:467.00px;font-size:12px;line-height:17px;letter-spacing:-0.041px;">Keep input objects</span>
<div class="b" style="left:428px;top:494px;width:342px;height:25px;background:#ebebeb;"></div>
<svg class="b" style="left:433px;top:503px;" width="10" height="8" viewBox="0 0 10 8"><path d="M1 1.5h8l-4 4.5z" fill="#444"/></svg>
<span class="t" style="left:454.00px;top:498.00px;font-size:13px;line-height:18px;letter-spacing:0.171px;color:#1a1a1a;">Options</span>
<span class="t" style="left:433.00px;top:530.50px;font-size:12px;line-height:17px;letter-spacing:-0.089px;">Offset:</span>
<div class="b" style="left:573px;top:529px;width:192px;height:19.5px;background:#ececec;border:1px solid #cfcfcf;border-radius:2px;background:linear-gradient(#f3f3f3,#e6e6e6);"></div>
<span class="t" style="left:586.00px;top:531.00px;font-size:12px;line-height:17px;letter-spacing:0.133px;">Asymmetric</span>
<svg class="b" style="left:749.5px;top:536.25px;" width="9" height="6" viewBox="0 0 9 6"><path d="M1 1h7 l-3.5 4 z" fill="#222"/></svg>
<span class="t" style="left:433.00px;top:556.50px;font-size:12px;line-height:17px;letter-spacing:-0.179px;">Upside thickness:</span>
<div class="b" style="left:573px;top:555px;width:171px;height:19px;background:#fff;border:1px solid #bdbdbd;"></div>
<span class="t" style="left:576.00px;top:556.00px;font-size:12px;line-height:17px;letter-spacing:-0.561px;">0.2</span>
<span class="t" style="left:754.00px;top:556.50px;font-size:12px;line-height:17px;letter-spacing:0.800px;">m</span>
<span class="t" style="left:433.00px;top:582.00px;font-size:12px;line-height:17px;letter-spacing:-0.126px;">Downside thickness:</span>
<div class="b" style="left:573px;top:580px;width:171px;height:19.5px;background:#fff;border:1px solid #bdbdbd;"></div>
<span class="t" style="left:576.00px;top:581.50px;font-size:12px;line-height:17px;letter-spacing:-0.561px;">0.1</span>
<span class="t" style="left:754.00px;top:582.00px;font-size:12px;line-height:17px;letter-spacing:0.800px;">m</span>
<span class="t" style="left:433.00px;top:607.50px;font-size:12px;line-height:17px;">Convex corner handling:</span>
<div class="b" style="left:573px;top:606px;width:192px;height:19.5px;background:#ececec;border:1px solid #cfcfcf;border-radius:2px;background:linear-gradient(#f3f3f3,#e6e6e6);"></div>
<span class="t" style="left:586.00px;top:608.00px;font-size:12px;line-height:17px;letter-spacing:-0.056px;">Fillet</span>
<svg class="b" style="left:749.5px;top:613.25px;" width="9" height="6" viewBox="0 0 9 6"><path d="M1 1h7 l-3.5 4 z" fill="#222"/></svg>
<div class="b" style="left:428px;top:637.5px;width:342px;height:24.5px;background:#ebebeb;"></div>
<svg class="b" style="left:433px;top:646px;" width="10" height="8" viewBox="0 0 10 8"><path d="M1 1.5h8l-4 4.5z" fill="#444"/></svg>
<span class="t" style="left:454.00px;top:641.00px;font-size:13px;line-height:18px;letter-spacing:-0.078px;color:#1a1a1a;">Selections of Resulting Entities</span>
<div class="b" style="left:431px;top:679px;width:336px;height:67.5px;border:1px solid #dcdcdc;"></div>
<div class="b" style="left:438px;top:672px;width:163px;height:14px;background:#fff;"></div>
<div class="b" style="left:440px;top:671.5px;width:14px;height:13px;background:#fff;border:1px solid #555;"></div>
<span class="t" style="left:459.00px;top:670.00px;font-size:12px;line-height:17px;letter-spacing:-0.077px;">Resulting objects selection</span>
<span class="t" style="left:440.00px;top:694.50px;font-size:12px;line-height:17px;letter-spacing:-0.148px;color:#8d8d8d;">Show in physics:</span>
<div class="b" style="left:537px;top:692px;width:221px;height:21px;background:#f1f1f1;border:1px solid #e2e2e2;border-radius:2px;"></div>
<span class="t" style="left:550.00px;top:695.00px;font-size:12px;line-height:17px;color:#8d8d8d;">Domain selection</span>
<svg class="b" style="left:742.5px;top:700px;" width="9" height="6" viewBox="0 0 9 6"><path d="M1 1h7 l-3.5 4 z" fill="#e2e2e2"/></svg>
<span class="t" style="left:440.00px;top:721.50px;font-size:12px;line-height:17px;letter-spacing:-0.085px;color:#8d8d8d;">Color:</span>
<div class="b" style="left:537px;top:719px;width:221px;height:21px;background:#f1f1f1;border:1px solid #e2e2e2;border-radius:2px;"></div>
<span class="t" style="left:550.00px;top:722.00px;font-size:12px;line-height:17px;letter-spacing:0.078px;color:#8d8d8d;">None</span>
<svg class="b" style="left:742.5px;top:727px;" width="9" height="6" viewBox="0 0 9 6"><path d="M1 1h7 l-3.5 4 z" fill="#e2e2e2"/></svg>
<div class="b" style="left:433px;top:761px;width:8px;height:1px;background:#d8d8d8;"></div>
<div class="b" style="left:559px;top:761px;width:206px;height:1px;background:#d8d8d8;"></div>
<span class="t" style="left:446.00px;top:753.00px;font-size:12px;line-height:17px;letter-spacing:-0.011px;">Cumulative selection</span>
<span class="t" style="left:433.00px;top:777.50px;font-size:12px;line-height:17px;letter-spacing:0.140px;">Contribute to:</span>
<div class="b" style="left:517px;top:775px;width:182px;height:21px;background:#ececec;border:1px solid #cfcfcf;border-radius:2px;background:linear-gradient(#f3f3f3,#e6e6e6);"></div>
<span class="t" style="left:530.00px;top:778.00px;font-size:12px;line-height:17px;letter-spacing:0.078px;">None</span>
<svg class="b" style="left:683.5px;top:783px;" width="9" height="6" viewBox="0 0 9 6"><path d="M1 1h7 l-3.5 4 z" fill="#222"/></svg>
<div class="b" style="left:707px;top:773px;width:60px;height:20px;background:#ececec;border:1px solid #d0d0d0;border-radius:2px;"></div>
<span class="t" style="left:725.00px;top:775.00px;font-size:12px;line-height:17px;">New</span>
<div class="b" style="left:428px;top:807px;width:342px;height:25px;background:#ebebeb;"></div>
<svg class="b" style="left:433px;top:815.5px;" width="10" height="8" viewBox="0 0 10 8"><path d="M1 1.5h8l-4 4.5z" fill="#444"/></svg>
<span class="t" style="left:454.00px;top:810.50px;font-size:13px;line-height:18px;letter-spacing:0.090px;color:#1a1a1a;">Assigned Attributes</span>
<span class="t" style="left:433.00px;top:841.00px;font-size:12px;line-height:17px;letter-spacing:0.088px;">Construction geometry:</span>
<div class="b" style="left:433px;top:862px;width:332px;height:20.5px;background:#ececec;border:1px solid #cfcfcf;border-radius:2px;background:linear-gradient(#f3f3f3,#e6e6e6);"></div>
<span class="t" style="left:446.00px;top:865.00px;font-size:12px;line-height:17px;letter-spacing:0.220px;">Inherit from input</span>
<svg class="b" style="left:749.5px;top:869.75px;" width="9" height="6" viewBox="0 0 9 6"><path d="M1 1h7 l-3.5 4 z" fill="#222"/></svg>
<svg class="b" style="left:0px;top:0px;" width="780" height="440" viewBox="0 0 780 440"><path d="M439.4 202.4h9.600v9.600h-9.600z" fill="#d2d2d2"/><path d="M439.4 202.4l-2.200-2.300h9.600l2.200 2.300z" fill="#dedede"/><path d="M439.4 202.4l-2.200-2.300v9.400l2.200 2.500z" fill="#c4c4c4"/><path d="M444.2 202.4v9.600M439.4 207.2h9.600M442 200.1l2.200 2.300M437.2 204.8l2.200 2.400" stroke="#fff" stroke-width=".8" opacity="0.8" fill="none"/><path d="M439.400 202.400h4.800v4.800h-4.800z" fill="#e4683f"/><path d="M439.400 202.400l-2.200-2.300h4.800l2.200 2.300z" fill="#ec8460"/><path d="M439.400 202.400l-2.200-2.300v4.700l2.200 2.400z" fill="#d4562f"/><path d="M558.4 202.4h9.600v9.600h-9.600z" fill="#dc6443"/><path d="M558.4 202.4l-2.200-2.300h9.600l2.200 2.300z" fill="#e27553"/><path d="M558.4 202.4l-2.200-2.300v9.400l2.200 2.500z" fill="#d25a3a"/><path d="M563.2 202.4v9.600M558.4 207.2h9.600M561 200.1l2.200 2.300M556.2 204.8l2.200 2.400" stroke="#f6d5c8" stroke-width=".8" opacity="0.9" fill="none"/><path d="M672.4 202.4h9.600v9.600h-9.600z" fill="#3c7ec4"/><path d="M672.4 202.4l-2.200-2.300h9.600l2.200 2.300z" fill="#5a96d4"/><path d="M672.4 202.4l-2.200-2.300v9.400l2.200 2.500z" fill="#2f6cb0"/><path d="M677.2 202.4v9.600M672.4 207.2h9.600M675 200.1l2.200 2.300M670.2 204.8l2.200 2.400" stroke="#d4e4f4" stroke-width=".8" opacity="0.9" fill="none"/><rect x="669.500" y="199.500" width="6" height="6.500" fill="none" stroke="#c0189c" stroke-width="1.100"/><rect x="747.500" y="231.500" width="13.500" height="13" rx="1" fill="#fff" stroke="#777" stroke-width="1.100"/><rect x="748" y="232" width="12.500" height="2.400" fill="#cfcfcf"/><path d="M747.500 234.600h13.500" stroke="#777" stroke-width="1"/><path d="M751.500 237.500h6.500M751.500 240h6.500" stroke="#1aa384" stroke-width="1.100"/><path d="M746 246l4.600-4.600" stroke="#1aa384" stroke-width="1.300"/><path d="M747.300 241h4v4z" fill="#1aa384"/><rect x="438" y="355.700" width="28.200" height="12.600" rx="2" fill="#e2e2e2" stroke="#3d5a80" stroke-width="1.400"/><rect x="440" y="358" width="8.400" height="8" rx="1" fill="#b5b6b5" stroke="#3d5a80" stroke-width="1.200"/><path d="M450.200 359.200h11.300a2.800 2.800 0 0 1 0 5.600h-11.300z" fill="#b5b6b5"/><path d="M714.500 344.500h9v12h-9z" fill="#fff" stroke="#c9c9c9"/><path d="M716.500 348h1M716.500 350.500h1M716.500 353h1" stroke="#c9c9c9"/><path d="M719.500 347.500h10v12h-10z" fill="#fff" stroke="#c9c9c9"/><path d="M722 351.500h5M722 353.500h5M722 355.500h5" stroke="#c9c9c9"/><path d="M754.500 345v13M748 351.500h13" stroke="#b5b5b5" stroke-width="1"/><path d="M715.500 366.500h3l.700-1.500h3l.700 1.500h3v3h-4.400v7.500h-6z" fill="#efefef" stroke="#c9c9c9"/><path d="M721.500 370.500h8v8.500h-8z" fill="#fff" stroke="#c9c9c9"/><path d="M748 371.500h13" stroke="#b5b5b5" stroke-width="1"/><rect x="718.500" y="388.500" width="6" height="6" fill="#fff" stroke="#aaa"/><path d="M719.800 391.500h3.400M721.500 389.800v3.400" stroke="#999" stroke-width=".9"/><path d="M721.500 384l-1.300 1.600h2.600zM721.500 399l-1.300-1.600h2.600zM714 391.500l1.600-1.300v2.600zM729 391.500l-1.600-1.300v2.600z" fill="#cfcfcf"/><rect x="750.500" y="385.500" width="11" height="12.500" fill="none" stroke="#b9b9b9" stroke-dasharray="2.400 1.400"/><path d="M753.500 387.500h6v7z" fill="#c9c9c9"/><path d="M748.500 384l4 8" stroke="#bdbdbd" stroke-width="1.300"/><path d="M751.500 391.500l2.200-1l3 6l-4.300 1.300z" fill="#d2d2d2"/></svg>
<div class="b" style="left:776px;top:141px;width:1141px;height:786px;border:1px solid #d2d2d2;"></div>
<span class="t" style="left:783.00px;top:148.00px;font-size:19.8px;line-height:28px;transform:scaleX(0.8726);transform-origin:0 0;color:#24539b;font-family:'DejaVu Sans',sans-serif;font-weight:200;-webkit-text-stroke:0.3px #24539b;">Graphics</span>
<svg class="b" style="left:1889px;top:154px;" width="12" height="12" viewBox="0 0 12 12"><path d="M.4 3h8.200l-4.100 4.200z" fill="#4d4d4f"/></svg>
<svg class="b" style="left:1904px;top:154px;" width="10" height="14" viewBox="0 0 10 14"><path d="M1.500 1h4.900v6h.9l.2 1.200h-2.900v3l-.6 .6l-.6-.6v-3h-2.900l.2-1.200h.8z" fill="#4d4d4f"/></svg>
<svg class="b" style="left:0px;top:0px;" width="1920" height="200" viewBox="0 0 1920 200"><circle cx="790.6" cy="182.600" r="4.700" fill="#fff" stroke="#3688cf" stroke-width="1.400"/><path d="M794.1 186.200l4.200 4.200" stroke="#3688cf" stroke-width="1.900"/><path d="M788.1 182.600h5" stroke="#3688cf" stroke-width="1.100"/><path d="M790.6 180.100v5" stroke="#3688cf" stroke-width="1.100"/><circle cx="813.4" cy="182.600" r="4.700" fill="#fff" stroke="#3688cf" stroke-width="1.400"/><path d="M816.9 186.200l4.200 4.200" stroke="#3688cf" stroke-width="1.900"/><path d="M810.9 182.600h5" stroke="#3688cf" stroke-width="1.100"/><rect x="830.500" y="183" width="8" height="6.500" fill="none" stroke="#3688cf" stroke-width="1.200" stroke-dasharray="2.200 1.300"/><circle cx="839" cy="182.300" r="4.300" fill="#fff" stroke="#3688cf" stroke-width="1.400"/><path d="M842.200 185.700l3.600 3.800" stroke="#3688cf" stroke-width="1.900"/><path d="M836.700 182.300h4.600M839 180v4.600" stroke="#3688cf" stroke-width="1"/><path d="M853.5 182.25h6l-3 3.5z" fill="#111"/><rect x="874.500" y="179.500" width="8" height="8" fill="#fff" stroke="#666" stroke-width="1.100"/><path d="M876.300 183.500h4.400M878.500 181.300v4.400" stroke="#555" stroke-width="1"/><path d="M878.500 176l-1.700 1.900h3.400zM878.500 191l-1.700-1.900h3.400zM871 183.500l1.900-1.700v3.400zM886 183.500l-1.900-1.700v3.400z" fill="#5a9fd8"/><rect x="894.500" y="176.500" width="14" height="14" fill="#fff" stroke="#666" stroke-width="1.100"/><path d="M899.300 183.500h4.400M901.500 181.300v4.400" stroke="#555" stroke-width="1"/><path d="M901.500 180l-2.200-2.300h4.400zM901.500 187l-2.200 2.300h4.400zM898 183.500l-2.300-2.200v4.400zM905 183.500l2.300-2.200v4.400z" fill="#3688cf"/><path d="M917.5 176v15.500" stroke="#cfcfcf" stroke-width="1"/><path d="M966.5 176v15.500" stroke="#cfcfcf" stroke-width="1"/><path d="M1015.5 176v15.500" stroke="#cfcfcf" stroke-width="1"/><path d="M1151.5 176v15.500" stroke="#cfcfcf" stroke-width="1"/><path d="M1246.5 176v15.500" stroke="#cfcfcf" stroke-width="1"/><path d="M1277.5 176v15.500" stroke="#cfcfcf" stroke-width="1"/><path d="M1348.5 176v15.500" stroke="#cfcfcf" stroke-width="1"/><path d="M931.500 189v-11" stroke="#3688cf" stroke-width="1.100"/><path d="M931.500 176.500l-1.900 2.600h3.800z" fill="#3688cf"/><path d="M931.500 189l-5.300-4.500" stroke="#3fae49" stroke-width="1.100"/><path d="M925 183.300l3 .500l-2 2.200z" fill="#3fae49"/><path d="M931.500 189l8-4.800" stroke="#dc2a6a" stroke-width="1.100"/><path d="M941 183.300l-3.200 .200l1.600 2.500z" fill="#dc2a6a"/><path d="M948.5 182.25h6l-3 3.5z" fill="#111"/><rect x="974.500" y="178.500" width="11.500" height="6.500" rx="1.800" fill="#e6e6e6" stroke="#a8a8a8" stroke-width="1"/><rect x="977.500" y="182.500" width="12.500" height="7" rx="2" fill="#3688cf"/><path d="M997.5 182.25h6l-3 3.5z" fill="#111"/><rect x="1023.500" y="178.500" width="15" height="10" rx="2.500" fill="#e2e2e2" stroke="#a8a8a8" stroke-width="1"/><path d="M1023.500 183.500h15" stroke="#b8b8b8" stroke-width=".8"/><rect x="1028.500" y="176.500" width="8.500" height="6.500" fill="#fff" stroke="#3688cf" stroke-width="1.100" stroke-dasharray="2 1.200"/><rect x="1030.500" y="178.300" width="4.500" height="3.200" fill="#3688cf"/><path d="M1046.5 182.25h6l-3 3.5z" fill="#111"/><rect x="1064" y="178.500" width="16" height="10.500" rx="3" fill="#3688cf"/><rect x="1069.500" y="176.500" width="8.500" height="6.500" fill="#fff" stroke="#8e8e8e" stroke-width="1.100" stroke-dasharray="2 1.200"/><rect x="1071.300" y="178.300" width="5" height="3.400" fill="#cfcfcf"/><path d="M1087.5 182.25h6l-3 3.5z" fill="#111"/><rect x="1106.700" y="177.700" width="12.600" height="12.600" fill="none" stroke="#3688cf" stroke-width="1.300" stroke-dasharray="3.200 1.600"/><path d="M1109.400 180.400h7v4.200l-2.600-.600l.400 3.400h-4.800z" fill="#3688cf"/><path d="M1114.400 184.200l6.400 6.400" stroke="#3688cf" stroke-width="1.400"/><path d="M1114 183.800l5 .900l-4.100 4.100z" fill="#3688cf"/><rect x="1130.700" y="177.700" width="12" height="12.600" fill="none" stroke="#3688cf" stroke-width="1.300" stroke-dasharray="3.200 1.600"/><path d="M1135 180.400h5.600v6.500z" fill="#3688cf"/><path d="M1129.6 176.2l2.600 7.200" stroke="#5a5a5a" stroke-width="1.600"/><path d="M1131.3 183.5l2.200-.900q3.500 3.300 6.200 7.300l-2.400 .500l-.300 1.300l-2.200-.400l-1.500 .900q-2.200-4-2-8.700z" fill="#f3b565"/><path d="M1132.8 184.8l2.300 5.500M1133.6 184.2l3.400 4.600" stroke="#e09a40" stroke-width=".600" fill="none"/><path d="M1160.500 184.500q6.500-6 13 0q-6.500 6-13 0z" fill="#eee" stroke="#b5b5b5" stroke-width="1.200"/><circle cx="1167" cy="184.500" r="2" fill="#c4c4c4"/><path d="M1162.500 179l9.500 10.500" stroke="#3688cf" stroke-width="1.200"/><path d="M1185.500 181.500a4 4 0 1 1 4.300 3.900v2" fill="none" stroke="#3688cf" stroke-width="1.400"/><path d="M1183.300 178.500l.500 4.300l3.900-1.300z" fill="#3688cf"/><rect x="1182.500" y="187" width="7" height="3.500" rx="1.700" fill="#3688cf"/><circle cx="1184.500" cy="188.700" r="1" fill="#fff"/><circle cx="1187.500" cy="188.700" r="1" fill="#fff"/><path d="M1192.500 187.500l4 3" stroke="#d2d2d2" stroke-width="2.200" stroke-linecap="round"/><path d="M1192.500 187.300l4 3" stroke="#7fb5e3" stroke-width=".7"/><rect x="1205.600" y="177.600" width="14.800" height="11.800" rx="1" fill="#fff" stroke="#3688cf" stroke-width="1.200"/><path d="M1205.600 180.300h14.800" stroke="#3688cf" stroke-width="1"/><path d="M1208.500 185q4.500-4 9 0q-4.500 4-9 0z" fill="#fff" stroke="#3688cf" stroke-width="1.100"/><circle cx="1213" cy="185" r="1.500" fill="#3688cf"/><path d="M1228.5 182.25h6l-3 3.5z" fill="#111"/><rect x="1253.500" y="175.500" width="17.500" height="17" rx="2" fill="#bfe0f8" stroke="#2f9bee" stroke-width="1.100"/><rect x="1255.500" y="177.500" width="13.500" height="13" fill="#bfe0f8" stroke="#4a4a4a" stroke-width="1.300"/><rect x="1257.7" y="179.4" width="2.600" height="2.600" fill="#3688cf"/><rect x="1257.7" y="182.8" width="2.600" height="2.600" fill="#3688cf"/><rect x="1257.7" y="186.2" width="2.600" height="2.600" fill="#3688cf"/><rect x="1261.1" y="179.4" width="2.600" height="2.600" fill="#3688cf"/><rect x="1261.1" y="182.8" width="2.600" height="2.600" fill="#3688cf"/><rect x="1261.1" y="186.2" width="2.600" height="2.600" fill="#3688cf"/><rect x="1264.5" y="179.4" width="2.600" height="2.600" fill="#3688cf"/><rect x="1264.5" y="182.8" width="2.600" height="2.600" fill="#3688cf"/><rect x="1264.5" y="186.2" width="2.600" height="2.600" fill="#3688cf"/><path d="M1285.500 177h10l3.500 2.500v4.500h-10l-3.500-4.500z" fill="#e6e6e6" stroke="#aaa" stroke-width="1"/><rect x="1289" y="179.500" width="10" height="4.500" fill="#5a9fd8" stroke="#3688cf" stroke-width="1"/><circle cx="1293.500" cy="188.500" r="2.700" fill="#fff" stroke="#dc1e5a" stroke-width="1.300"/><path d="M1291.700 190.300l3.600-3.600" stroke="#dc1e5a" stroke-width="1.200"/><g transform="translate(1309.2 176.6) scale(0.62)"><path d="M12 .8c6.500-.8 10.500 4 9.800 10.500c-.7 7-6 13-13.500 13.700c-4.500 .4-8.300-1.700-8-5c.3-3 3.300-3.500 4-6.500c.8-3.300-.5-5.500 1.200-8.500c1.300-2.300 3.700-3.800 6.500-4.200z" fill="#e4e4e4" stroke="#888" stroke-width="1.200"/><circle cx="9.300" cy="8.200" r="2.800" fill="#fff" stroke="#888" stroke-width="1.100"/><circle cx="16.300" cy="6.600" r="2.300" fill="#8ecbf2"/><circle cx="16.800" cy="11.600" r="2.200" fill="#3a86cc"/><circle cx="15.600" cy="15.700" r="2.200" fill="#f6a53d"/><circle cx="12" cy="18" r="2.200" fill="#ee6c30"/><circle cx="6.800" cy="18.800" r="2.400" fill="#dc1e64"/></g><path d="M1330.5 182.25h6l-3 3.5z" fill="#111"/><circle cx="1364" cy="184" r="5.600" fill="none" stroke="#3688cf" stroke-width="3.200"/><path d="M1366.56 184.45L1367.21 190.89" stroke="#fff" stroke-width="1.100"/><path d="M1364.89 186.44L1359.64 190.23" stroke="#fff" stroke-width="1.100"/><path d="M1362.33 185.99L1356.43 183.34" stroke="#fff" stroke-width="1.100"/><path d="M1361.44 183.55L1360.79 177.11" stroke="#fff" stroke-width="1.100"/><path d="M1363.11 181.56L1368.36 177.77" stroke="#fff" stroke-width="1.100"/><path d="M1365.67 182.01L1371.57 184.66" stroke="#fff" stroke-width="1.100"/><path d="M1379.5 182.25h6l-3 3.5z" fill="#111"/><path d="M1397 180h3.500l1.200-2h6l1.200 2h4.100v10h-16z" fill="#3688cf"/><circle cx="1405" cy="184.800" r="3.100" fill="#fff"/><circle cx="1405" cy="184.800" r="1.900" fill="#3688cf"/><path d="M1424 181v-4.500h9v4.500M1424 187.500v4h9v-4" fill="#fff" stroke="#3688cf" stroke-width="1.200"/><rect x="1421.600" y="181" width="13.800" height="7.500" rx="1.200" fill="#b9d4ee" stroke="#3688cf" stroke-width="1.200"/><rect x="1424" y="186.500" width="9" height="5" fill="#fff" stroke="#3688cf" stroke-width="1.200"/></svg>
<svg class="b" style="left:0;top:0" width="1920" height="940" viewBox="0 0 1920 940"><rect x="828" y="205" width="1079" height="698" fill="#f8fcff"/><path d="M828.12 205V903M838.70 205V903M849.28 205V903M859.86 205V903M870.44 205V903M881.02 205V903M891.60 205V903M902.18 205V903M912.76 205V903M923.34 205V903M933.92 205V903M944.50 205V903M955.08 205V903M965.66 205V903M976.24 205V903M986.82 205V903M997.40 205V903M1007.98 205V903M1018.56 205V903M1029.14 205V903M1039.72 205V903M1050.30 205V903M1060.88 205V903M1071.46 205V903M1082.04 205V903M1092.62 205V903M1103.20 205V903M1113.78 205V903M1124.36 205V903M1134.94 205V903M1145.52 205V903M1156.10 205V903M1166.68 205V903M1177.26 205V903M1187.84 205V903M1198.42 205V903M1209.00 205V903M1219.58 205V903M1230.16 205V903M1240.74 205V903M1251.32 205V903M1261.90 205V903M1272.48 205V903M1283.06 205V903M1293.64 205V903M1304.22 205V903M1314.80 205V903M1325.38 205V903M1335.96 205V903M1346.54 205V903M1357.12 205V903M1367.70 205V903M1378.28 205V903M1388.86 205V903M1399.44 205V903M1410.02 205V903M1420.60 205V903M1431.18 205V903M1441.76 205V903M1452.34 205V903M1462.92 205V903M1473.50 205V903M1484.08 205V903M1494.66 205V903M1505.24 205V903M1515.82 205V903M1526.40 205V903M1536.98 205V903M1547.56 205V903M1558.14 205V903M1568.72 205V903M1579.30 205V903M1589.88 205V903M1600.46 205V903M1611.04 205V903M1621.62 205V903M1632.20 205V903M1642.78 205V903M1653.36 205V903M1663.94 205V903M1674.52 205V903M1685.10 205V903M1695.68 205V903M1706.26 205V903M1716.84 205V903M1727.42 205V903M1738.00 205V903M1748.58 205V903M1759.16 205V903M1769.74 205V903M1780.32 205V903M1790.90 205V903M1801.48 205V903M1812.06 205V903M1822.64 205V903M1833.22 205V903M1843.80 205V903M1854.38 205V903M1864.96 205V903M1875.54 205V903M1886.12 205V903M1896.70 205V903M828 892.46H1907M828 881.88H1907M828 871.30H1907M828 860.72H1907M828 850.14H1907M828 839.56H1907M828 828.98H1907M828 818.40H1907M828 807.82H1907M828 797.24H1907M828 786.66H1907M828 776.08H1907M828 765.50H1907M828 754.92H1907M828 744.34H1907M828 733.76H1907M828 723.18H1907M828 712.60H1907M828 702.02H1907M828 691.44H1907M828 680.86H1907M828 670.28H1907M828 659.70H1907M828 649.12H1907M828 638.54H1907M828 627.96H1907M828 617.38H1907M828 606.80H1907M828 596.22H1907M828 585.64H1907M828 575.06H1907M828 564.48H1907M828 553.90H1907M828 543.32H1907M828 532.74H1907M828 522.16H1907M828 511.58H1907M828 501.00H1907M828 490.42H1907M828 479.84H1907M828 469.26H1907M828 458.68H1907M828 448.10H1907M828 437.52H1907M828 426.94H1907M828 416.36H1907M828 405.78H1907M828 395.20H1907M828 384.62H1907M828 374.04H1907M828 363.46H1907M828 352.88H1907M828 342.30H1907M828 331.72H1907M828 321.14H1907M828 310.56H1907M828 299.98H1907M828 289.40H1907M828 278.82H1907M828 268.24H1907M828 257.66H1907M828 247.08H1907M828 236.50H1907M828 225.92H1907M828 215.34H1907" stroke="#dbe8f3" stroke-width="1.3" fill="none"/><path d="M1103.20 236.50H1632.20A52.90 52.90 0 0 1 1685.10 289.40V818.40A52.90 52.90 0 0 1 1632.20 871.30H1103.20A52.90 52.90 0 0 1 1050.30 818.40V289.40A52.90 52.90 0 0 1 1103.20 236.50Z M1209.00 395.20V712.60H1526.40V395.20Z" fill="#c8c8c8" fill-rule="evenodd" stroke="#111" stroke-width="1.1"/><rect x="1103.20" y="289.40" width="529.00" height="529.00" fill="none" stroke="#111" stroke-width="1.2"/><rect x="1101.70" y="816.90" width="3" height="3" fill="#000"/><rect x="1630.70" y="816.90" width="3" height="3" fill="#000"/><rect x="1101.70" y="287.90" width="3" height="3" fill="#000"/><rect x="1630.70" y="287.90" width="3" height="3" fill="#000"/><rect x="828" y="205" width="1079" height="698" fill="none" stroke="#666" stroke-width="2"/><path d="M828.12 205v-4M828.12 903v4M838.70 205v-4M838.70 903v4M849.28 205v-4M849.28 903v4M859.86 205v-4M859.86 903v4M870.44 205v-4M870.44 903v4M881.02 205v-4M881.02 903v4M902.18 205v-4M902.18 903v4M912.76 205v-4M912.76 903v4M923.34 205v-4M923.34 903v4M933.92 205v-4M933.92 903v4M944.50 205v-4M944.50 903v4M955.08 205v-4M955.08 903v4M965.66 205v-4M965.66 903v4M976.24 205v-4M976.24 903v4M986.82 205v-4M986.82 903v4M1007.98 205v-4M1007.98 903v4M1018.56 205v-4M1018.56 903v4M1029.14 205v-4M1029.14 903v4M1039.72 205v-4M1039.72 903v4M1050.30 205v-4M1050.30 903v4M1060.88 205v-4M1060.88 903v4M1071.46 205v-4M1071.46 903v4M1082.04 205v-4M1082.04 903v4M1092.62 205v-4M1092.62 903v4M1113.78 205v-4M1113.78 903v4M1124.36 205v-4M1124.36 903v4M1134.94 205v-4M1134.94 903v4M1145.52 205v-4M1145.52 903v4M1156.10 205v-4M1156.10 903v4M1166.68 205v-4M1166.68 903v4M1177.26 205v-4M1177.26 903v4M1187.84 205v-4M1187.84 903v4M1198.42 205v-4M1198.42 903v4M1219.58 205v-4M1219.58 903v4M1230.16 205v-4M1230.16 903v4M1240.74 205v-4M1240.74 903v4M1251.32 205v-4M1251.32 903v4M1261.90 205v-4M1261.90 903v4M1272.48 205v-4M1272.48 903v4M1283.06 205v-4M1283.06 903v4M1293.64 205v-4M1293.64 903v4M1304.22 205v-4M1304.22 903v4M1325.38 205v-4M1325.38 903v4M1335.96 205v-4M1335.96 903v4M1346.54 205v-4M1346.54 903v4M1357.12 205v-4M1357.12 903v4M1367.70 205v-4M1367.70 903v4M1378.28 205v-4M1378.28 903v4M1388.86 205v-4M1388.86 903v4M1399.44 205v-4M1399.44 903v4M1410.02 205v-4M1410.02 903v4M1431.18 205v-4M1431.18 903v4M1441.76 205v-4M1441.76 903v4M1452.34 205v-4M1452.34 903v4M1462.92 205v-4M1462.92 903v4M1473.50 205v-4M1473.50 903v4M1484.08 205v-4M1484.08 903v4M1494.66 205v-4M1494.66 903v4M1505.24 205v-4M1505.24 903v4M1515.82 205v-4M1515.82 903v4M1536.98 205v-4M1536.98 903v4M1547.56 205v-4M1547.56 903v4M1558.14 205v-4M1558.14 903v4M1568.72 205v-4M1568.72 903v4M1579.30 205v-4M1579.30 903v4M1589.88 205v-4M1589.88 903v4M1600.46 205v-4M1600.46 903v4M1611.04 205v-4M1611.04 903v4M1621.62 205v-4M1621.62 903v4M1642.78 205v-4M1642.78 903v4M1653.36 205v-4M1653.36 903v4M1663.94 205v-4M1663.94 903v4M1674.52 205v-4M1674.52 903v4M1685.10 205v-4M1685.10 903v4M1695.68 205v-4M1695.68 903v4M1706.26 205v-4M1706.26 903v4M1716.84 205v-4M1716.84 903v4M1727.42 205v-4M1727.42 903v4M1748.58 205v-4M1748.58 903v4M1759.16 205v-4M1759.16 903v4M1769.74 205v-4M1769.74 903v4M1780.32 205v-4M1780.32 903v4M1790.90 205v-4M1790.90 903v4M1801.48 205v-4M1801.48 903v4M1812.06 205v-4M1812.06 903v4M1822.64 205v-4M1822.64 903v4M1833.22 205v-4M1833.22 903v4M1854.38 205v-4M1854.38 903v4M1864.96 205v-4M1864.96 903v4M1875.54 205v-4M1875.54 903v4M1886.12 205v-4M1886.12 903v4M1896.70 205v-4M1896.70 903v4M828 892.46h-4M1907 892.46h4M828 881.88h-4M1907 881.88h4M828 860.72h-4M1907 860.72h4M828 850.14h-4M1907 850.14h4M828 839.56h-4M1907 839.56h4M828 828.98h-4M1907 828.98h4M828 807.82h-4M1907 807.82h4M828 797.24h-4M1907 797.24h4M828 786.66h-4M1907 786.66h4M828 776.08h-4M1907 776.08h4M828 754.92h-4M1907 754.92h4M828 744.34h-4M1907 744.34h4M828 733.76h-4M1907 733.76h4M828 723.18h-4M1907 723.18h4M828 702.02h-4M1907 702.02h4M828 691.44h-4M1907 691.44h4M828 680.86h-4M1907 680.86h4M828 670.28h-4M1907 670.28h4M828 649.12h-4M1907 649.12h4M828 638.54h-4M1907 638.54h4M828 627.96h-4M1907 627.96h4M828 617.38h-4M1907 617.38h4M828 596.22h-4M1907 596.22h4M828 585.64h-4M1907 585.64h4M828 575.06h-4M1907 575.06h4M828 564.48h-4M1907 564.48h4M828 543.32h-4M1907 543.32h4M828 532.74h-4M1907 532.74h4M828 522.16h-4M1907 522.16h4M828 511.58h-4M1907 511.58h4M828 490.42h-4M1907 490.42h4M828 479.84h-4M1907 479.84h4M828 469.26h-4M1907 469.26h4M828 458.68h-4M1907 458.68h4M828 437.52h-4M1907 437.52h4M828 426.94h-4M1907 426.94h4M828 416.36h-4M1907 416.36h4M828 405.78h-4M1907 405.78h4M828 384.62h-4M1907 384.62h4M828 374.04h-4M1907 374.04h4M828 363.46h-4M1907 363.46h4M828 352.88h-4M1907 352.88h4M828 331.72h-4M1907 331.72h4M828 321.14h-4M1907 321.14h4M828 310.56h-4M1907 310.56h4M828 299.98h-4M1907 299.98h4M828 278.82h-4M1907 278.82h4M828 268.24h-4M1907 268.24h4M828 257.66h-4M1907 257.66h4M828 247.08h-4M1907 247.08h4M828 225.92h-4M1907 225.92h4M828 215.34h-4M1907 215.34h4" stroke="#7d7d7d" stroke-width="1.1" fill="none"/><path d="M891.60 205v-8M891.60 903v8M997.40 205v-8M997.40 903v8M1103.20 205v-8M1103.20 903v8M1209.00 205v-8M1209.00 903v8M1314.80 205v-8M1314.80 903v8M1420.60 205v-8M1420.60 903v8M1526.40 205v-8M1526.40 903v8M1632.20 205v-8M1632.20 903v8M1738.00 205v-8M1738.00 903v8M1843.80 205v-8M1843.80 903v8M828 871.30h-8M1907 871.30h8M828 818.40h-8M1907 818.40h8M828 765.50h-8M1907 765.50h8M828 712.60h-8M1907 712.60h8M828 659.70h-8M1907 659.70h8M828 606.80h-8M1907 606.80h8M828 553.90h-8M1907 553.90h8M828 501.00h-8M1907 501.00h8M828 448.10h-8M1907 448.10h8M828 395.20h-8M1907 395.20h8M828 342.30h-8M1907 342.30h8M828 289.40h-8M1907 289.40h8M828 236.50h-8M1907 236.50h8" stroke="#666" stroke-width="1.4" fill="none"/><path d="M963.5 908.2l5.5 -5.7l5.5 5.7z" fill="#000"/><path d="M822.8 573.3l5.3 5.6l-5.3 5.6z" fill="#000"/><text x="892.2" y="920.8" style="font-family:&quot;DejaVu Sans&quot;,sans-serif;font-size:11.7px;fill:#000">-0.4</text><text x="998.0" y="920.8" style="font-family:&quot;DejaVu Sans&quot;,sans-serif;font-size:11.7px;fill:#000">-0.2</text><text x="1103.8" y="920.8" style="font-family:&quot;DejaVu Sans&quot;,sans-serif;font-size:11.7px;fill:#000">0</text><text x="1209.6" y="920.8" style="font-family:&quot;DejaVu Sans&quot;,sans-serif;font-size:11.7px;fill:#000">0.2</text><text x="1315.4" y="920.8" style="font-family:&quot;DejaVu Sans&quot;,sans-serif;font-size:11.7px;fill:#000">0.4</text><text x="1421.2" y="920.8" style="font-family:&quot;DejaVu Sans&quot;,sans-serif;font-size:11.7px;fill:#000">0.6</text><text x="1527.0" y="920.8" style="font-family:&quot;DejaVu Sans&quot;,sans-serif;font-size:11.7px;fill:#000">0.8</text><text x="1632.8" y="920.8" style="font-family:&quot;DejaVu Sans&quot;,sans-serif;font-size:11.7px;fill:#000">1</text><text x="1738.6" y="920.8" style="font-family:&quot;DejaVu Sans&quot;,sans-serif;font-size:11.7px;fill:#000">1.2</text><text x="1844.4" y="920.8" style="font-family:&quot;DejaVu Sans&quot;,sans-serif;font-size:11.7px;fill:#000">1.4</text><text x="819.3" y="881.2" text-anchor="end" style="font-family:&quot;DejaVu Sans&quot;,sans-serif;font-size:11.7px;fill:#000">-0.1</text><text x="819.3" y="828.3" text-anchor="end" style="font-family:&quot;DejaVu Sans&quot;,sans-serif;font-size:11.7px;fill:#000">0</text><text x="819.3" y="775.4" text-anchor="end" style="font-family:&quot;DejaVu Sans&quot;,sans-serif;font-size:11.7px;fill:#000">0.1</text><text x="819.3" y="722.5" text-anchor="end" style="font-family:&quot;DejaVu Sans&quot;,sans-serif;font-size:11.7px;fill:#000">0.2</text><text x="819.3" y="669.6" text-anchor="end" style="font-family:&quot;DejaVu Sans&quot;,sans-serif;font-size:11.7px;fill:#000">0.3</text><text x="819.3" y="616.7" text-anchor="end" style="font-family:&quot;DejaVu Sans&quot;,sans-serif;font-size:11.7px;fill:#000">0.4</text><text x="819.3" y="563.8" text-anchor="end" style="font-family:&quot;DejaVu Sans&quot;,sans-serif;font-size:11.7px;fill:#000">0.5</text><text x="819.3" y="510.9" text-anchor="end" style="font-family:&quot;DejaVu Sans&quot;,sans-serif;font-size:11.7px;fill:#000">0.6</text><text x="819.3" y="458.0" text-anchor="end" style="font-family:&quot;DejaVu Sans&quot;,sans-serif;font-size:11.7px;fill:#000">0.7</text><text x="819.3" y="405.1" text-anchor="end" style="font-family:&quot;DejaVu Sans&quot;,sans-serif;font-size:11.7px;fill:#000">0.8</text><text x="819.3" y="352.2" text-anchor="end" style="font-family:&quot;DejaVu Sans&quot;,sans-serif;font-size:11.7px;fill:#000">0.9</text><text x="819.3" y="299.3" text-anchor="end" style="font-family:&quot;DejaVu Sans&quot;,sans-serif;font-size:11.7px;fill:#000">1</text><text x="819.3" y="246.4" text-anchor="end" style="font-family:&quot;DejaVu Sans&quot;,sans-serif;font-size:11.7px;fill:#000">1.1</text><text x="832.2" y="215.7" style="font-family:&quot;DejaVu Sans&quot;,sans-serif;font-size:11.7px;fill:#000;font-size:10px">m</text><text x="1892" y="897.8" style="font-family:&quot;DejaVu Sans&quot;,sans-serif;font-size:11.7px;fill:#000;font-size:10px">m</text></svg>
<svg class="b" style="left:0px;top:0px;" width="1" height="1" viewBox="0 0 1 1"><g transform="translate(1885.2 214.1) scale(1)"><defs><linearGradient id="lgA" x1="0" y1="0" x2="0" y2="1"><stop offset="0" stop-color="#1b2f9a"/><stop offset=".55" stop-color="#2f8fe8"/><stop offset="1" stop-color="#10207a"/></linearGradient><linearGradient id="lgB" x1="0" y1="0" x2="1" y2="0"><stop offset="0" stop-color="#f8ee30"/><stop offset=".6" stop-color="#f0e040"/><stop offset="1" stop-color="#58b8e8"/></linearGradient></defs><path d="M-4.500 .5l12-4.500l9 5l1.500 8.500l-10 6l-10.500-4z" fill="#ededf0" opacity=".85"/><rect x="0" y="0" width="13.600" height="10.600" rx="2.200" fill="url(#lgA)"/><path d="M2.700 1.600l8.200 4l-8.200 3.900z" fill="url(#lgB)"/><rect x="0" y=".6" width="1.800" height="9.400" rx=".9" fill="#3a58c8" opacity=".8"/></g></svg>
<div class="b" style="left:776px;top:932px;width:1141px;height:197px;border:1px solid #d2d2d2;"></div>
<div class="b" style="left:777px;top:961px;width:1139px;height:1px;background:#d2d2d2;"></div>
<div class="b" style="left:781px;top:938px;width:89px;height:24px;background:#fff;border:1px solid #d0d3d8;border-bottom:none;"></div>
<div class="b" style="left:878px;top:938px;width:60px;height:23px;background:#ebebeb;"></div>
<div class="b" style="left:946px;top:938px;width:30.5px;height:23px;background:#ebebeb;"></div>
<span class="t" style="left:786.30px;top:943.00px;font-size:13px;line-height:18px;letter-spacing:-0.069px;color:#24539b;">Messages</span>
<svg class="b" style="left:852.5px;top:945px;" width="10" height="10" viewBox="0 0 10 10"><path d="M1 1l8 8M9 1l-8 8" stroke="#bcc4d4" stroke-width="1.200"/></svg>
<span class="t" style="left:882.00px;top:942.50px;font-size:13px;line-height:18px;">Progress</span>
<span class="t" style="left:950.00px;top:942.50px;font-size:13px;line-height:18px;letter-spacing:0.103px;">Log</span>
<svg class="b" style="left:1889px;top:946px;" width="12" height="12" viewBox="0 0 12 12"><path d="M.4 3h8.200l-4.100 4.200z" fill="#4d4d4f"/></svg>
<svg class="b" style="left:1904px;top:946px;" width="10" height="14" viewBox="0 0 10 14"><path d="M1.500 1h4.900v6h.9l.2 1.200h-2.900v3l-.6 .6l-.6-.6v-3h-2.900l.2-1.200h.8z" fill="#4d4d4f"/></svg>
<svg class="b" style="left:0px;top:0px;" width="1920" height="1000" viewBox="0 0 1920 1000"><path d="M787.3 969.6l2.600 7.200" stroke="#5a5a5a" stroke-width="1.600"/><path d="M789 976.9l2.200-.900q3.500 3.300 6.200 7.300l-2.400 .500l-.300 1.300l-2.200-.400l-1.500 .900q-2.200-4-2-8.700z" fill="#f3b565"/><path d="M790.5 978.2l2.300 5.500M791.3 977.6l3.400 4.600" stroke="#e09a40" stroke-width=".600" fill="none"/><rect x="806.600" y="968.600" width="16.800" height="16.800" rx="2.200" fill="#bfe0f8" stroke="#2f9bee" stroke-width="1.300"/><rect x="808.500" y="970.800" width="12" height="10.600" fill="#fff" stroke="#3688cf" stroke-width="1.100"/><path d="M808.500 973h12" stroke="#3688cf" stroke-width="1"/><rect x="811.800" y="975.800" width="10" height="6.600" fill="#fff" stroke="#3688cf" stroke-width="1.100"/><path d="M812.600 976.800l4.200 3l4.200-3" fill="none" stroke="#3688cf" stroke-width=".900"/></svg>
<div class="b" style="left:781px;top:990px;width:1131px;height:134px;background:#fff;border:1px solid #d2d2d2;"></div>
<span class="t" style="left:784.00px;top:991.00px;font-size:12px;line-height:17px;letter-spacing:-0.229px;">COMSOL Multiphysics 6.0.0.273</span>
<span class="t" style="left:784.00px;top:1006.00px;font-size:12px;line-height:17px;letter-spacing:-0.169px;">License will expire in 2 days.</span>
<span class="t" style="left:784.00px;top:1021.00px;font-size:12px;line-height:17px;letter-spacing:-0.065px;">[Nov 18, 2021, 9:14 AM] Geometry error (thi1): Solid input objects not supported.</span>
<span class="t" style="left:1241.00px;top:1141.00px;font-size:12px;line-height:17px;letter-spacing:-0.367px;">940 MB | 856 MB</span>
</body></html>
